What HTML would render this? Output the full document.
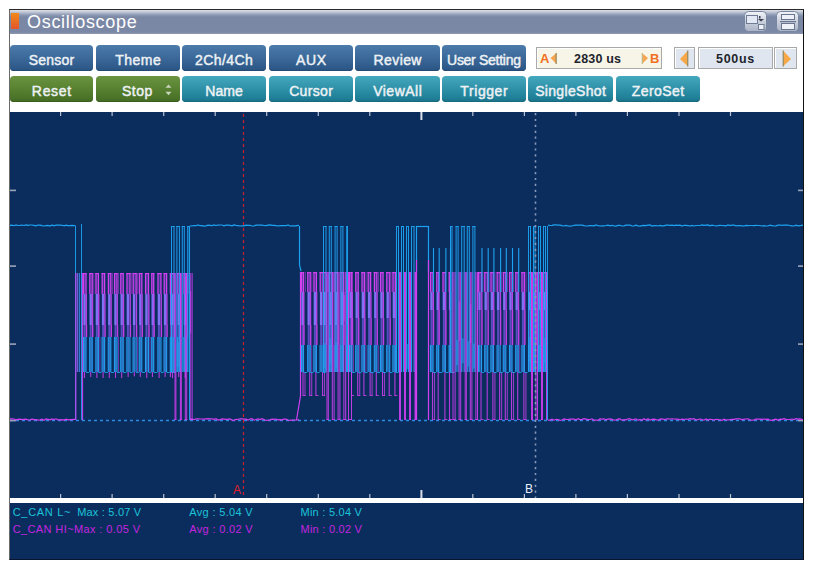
<!DOCTYPE html>
<html><head><meta charset="utf-8">
<style>
*{margin:0;padding:0;box-sizing:border-box}
html,body{width:813px;height:569px;background:#fff;overflow:hidden;font-family:"Liberation Sans",sans-serif}
.abs{position:absolute}
#frame{position:absolute;left:9px;top:9px;width:795px;height:551px;border-top:1px solid #2a2a2a;border-left:1px solid #6a6a6a;border-right:1px solid #111;border-bottom:1px solid #0a1630;}
#title{position:absolute;left:10px;top:10px;width:793px;height:24px;background:linear-gradient(#dde1e9 0px,#c0c7d5 2px,#8d99b3 5px,#7b88a5 7px,#7b88a5 22px,#8f9ab3 24px);}
#title .t{position:absolute;left:17px;top:1px;color:#fff;font-size:18px;line-height:22px;letter-spacing:0.7px}
#title .o{position:absolute;left:1px;top:3px;width:8px;height:16px;background:linear-gradient(#f28a1a,#e4552a)}
.btn{position:absolute;height:26px;border-radius:4px;color:#eef2f5;font-size:14px;font-weight:normal;-webkit-text-stroke:0.45px #eef2f5;text-align:center;line-height:30px;white-space:nowrap}
.b{background:linear-gradient(#4c7cac,#2f5b8b 85%,#29527f);box-shadow:inset 0 -1px 0 #244a76}
.g{background:linear-gradient(#6a943f,#4b7328 85%,#426822);box-shadow:inset 0 -1px 0 #3a5e1e}
.c{background:linear-gradient(#44a8be,#1f8098 85%,#1a7088);box-shadow:inset 0 -1px 0 #166a80}
#scope{position:absolute;left:10px;top:112px;width:793px;height:386px;background:#0b2d5e}
#info{position:absolute;left:10px;top:503px;width:793px;height:56px;background:#0b2d5e}
#info div{position:absolute;font-size:11px;line-height:12px;white-space:nowrap}
.cy{color:#1cc4d8} .mg{color:#c424de}
.box{position:absolute;border:1px solid #a9a9a9;box-shadow:inset 1px 1px 0 #fff}
.vt{position:absolute;font-weight:bold;font-size:12.5px;line-height:14px;color:#1e242c;white-space:nowrap}
</style></head><body>
<div id="frame"></div>
<div id="title"><div class="o"></div><div class="t">Oscilloscope</div></div>
<svg class="abs" style="left:0;top:0" width="813" height="40" viewBox="0 0 813 40">
 <defs><linearGradient id="ig" x1="0" y1="0" x2="0" y2="1"><stop offset="0" stop-color="#f2f4f8"/><stop offset="0.5" stop-color="#c9d0dc"/><stop offset="1" stop-color="#a9b3c6"/></linearGradient></defs>
 <rect x="744.5" y="11.5" width="22" height="20" rx="4" fill="url(#ig)" stroke="#7886a0"/>
 <rect x="746.5" y="15.5" width="11" height="8" fill="#e2e9f4" stroke="#707c94"/>
 <rect x="758.5" y="24.5" width="5.5" height="5" fill="#eef2f8" stroke="#707c94"/>
 <path d="M758 19 h6 l-3 2.5 z" fill="#3a4050"/><rect x="759" y="16" width="1.5" height="2.5" fill="#3a4050"/>
 <rect x="776.5" y="11.5" width="22" height="20" rx="4" fill="url(#ig)" stroke="#7886a0"/>
 <rect x="781.5" y="14.5" width="13" height="5" fill="#eef2f8" stroke="#6a7690"/>
 <rect x="780" y="21" width="16" height="1.2" fill="#6a7690"/>
 <rect x="781.5" y="23.5" width="13" height="6" fill="#eef2f8" stroke="#6a7690"/>
</svg>
<div class="btn b" style="left:10px;top:45px;width:83px"><span style="letter-spacing:0.20px;margin-right:-0.20px;">Sensor</span></div>
<div class="btn b" style="left:96px;top:45px;width:84px"><span style="letter-spacing:0.47px;margin-right:-0.47px;">Theme</span></div>
<div class="btn b" style="left:182px;top:45px;width:84px"><span style="letter-spacing:0.42px;margin-right:-0.42px;">2Ch/4Ch</span></div>
<div class="btn b" style="left:269px;top:45px;width:84px"><span style="letter-spacing:0.65px;margin-right:-0.65px;">AUX</span></div>
<div class="btn b" style="left:355px;top:45px;width:85px"><span style="letter-spacing:0.40px;margin-right:-0.40px;">Review</span></div>
<div class="btn b" style="left:442px;top:45px;width:84px"><span style="letter-spacing:-0.29px;margin-right:0.29px;">User Setting</span></div>
<div class="btn g" style="left:10px;top:76px;width:83px"><span style="letter-spacing:0.67px;margin-right:-0.67px;">Reset</span></div>
<div class="btn c" style="left:182px;top:76px;width:84px"><span style="letter-spacing:0.07px;margin-right:-0.07px;">Name</span></div>
<div class="btn c" style="left:269px;top:76px;width:84px"><span style="letter-spacing:0.34px;margin-right:-0.34px;">Cursor</span></div>
<div class="btn c" style="left:355px;top:76px;width:85px"><span style="letter-spacing:0.48px;margin-right:-0.48px;">ViewAll</span></div>
<div class="btn c" style="left:442px;top:76px;width:84px"><span style="letter-spacing:0.58px;margin-right:-0.58px;">Trigger</span></div>
<div class="btn c" style="left:528px;top:76px;width:85px"><span style="letter-spacing:0.33px;margin-right:-0.33px;">SingleShot</span></div>
<div class="btn c" style="left:616px;top:76px;width:84px"><span style="letter-spacing:0.42px;margin-right:-0.42px;">ZeroSet</span></div>
<div class="btn g" style="left:96px;top:76px;width:84px"></div>
<div class="abs" style="left:122px;top:76px;color:#eef2f5;font-size:14px;-webkit-text-stroke:0.45px #eef2f5;line-height:30px;letter-spacing:0.5px">Stop</div>
<svg class="abs" style="left:164px;top:83px" width="9" height="14"><path d="M1.5 4.8 L4.5 1.5 L7.5 4.8 Z M1.5 8.8 L4.5 12.3 L7.5 8.8 Z" fill="#c8d6bc"/></svg>
<div class="box" style="left:536px;top:47px;width:126px;height:22px;background:#f7f5e7"></div>
<div class="abs" style="left:540px;top:51px;color:#f07020;font-weight:bold;font-size:13px;line-height:15px">A</div>
<svg class="abs" style="left:549px;top:52px" width="10" height="14"><path d="M1.5 6 L7 1.5 L7 11.5 Z" fill="#f8a450"/><rect x="6.5" y="1" width="1.3" height="11" fill="#9c8a58"/></svg>
<div class="vt" style="left:574px;top:52px;letter-spacing:0.2px">2830 us</div>
<svg class="abs" style="left:640px;top:52px" width="10" height="14"><path d="M8 6 L2.5 1.5 L2.5 11.5 Z" fill="#f8a450"/><rect x="1.7" y="1" width="1.3" height="11" fill="#c8b888"/></svg>
<div class="abs" style="left:650px;top:51px;color:#f07020;font-weight:bold;font-size:13px;line-height:15px">B</div>
<div class="box" style="left:674px;top:47px;width:21px;height:22px;background:#dfe6ef"></div>
<svg class="abs" style="left:678px;top:49px" width="12" height="19"><path d="M2 10 L9.5 2 L9.5 17 Z" fill="#f8a848"/><rect x="9" y="1.5" width="1.4" height="16" fill="#a09068"/></svg>
<div class="box" style="left:698px;top:47px;width:75px;height:22px;background:#dfe6ef"></div>
<div class="vt" style="left:716px;top:52px;letter-spacing:0.7px">500us</div>
<div class="box" style="left:774px;top:47px;width:23px;height:22px;background:#dfe6ef"></div>
<svg class="abs" style="left:781px;top:49px" width="12" height="19"><path d="M10 10 L2.5 2 L2.5 17 Z" fill="#f8a848"/><rect x="1.6" y="1.5" width="1.4" height="16" fill="#a09068"/></svg>
<div id="scope"></div>
<div id="info">
 <div class="cy" style="left:2.7px;top:3px;letter-spacing:0.7px">C_CAN L~</div>
 <div class="cy" style="left:67.2px;top:3px;letter-spacing:0.2px">Max : 5.07 V</div>
 <div class="cy" style="left:179.3px;top:3px;letter-spacing:0.33px">Avg : 5.04 V</div>
 <div class="cy" style="left:290.5px;top:3px;letter-spacing:0.25px">Min : 5.04 V</div>
 <div class="mg" style="left:2.7px;top:19.6px;letter-spacing:0.39px">C_CAN HI~Max : 0.05 V</div>
 <div class="mg" style="left:179.3px;top:19.6px;letter-spacing:0.33px">Avg : 0.02 V</div>
 <div class="mg" style="left:290.5px;top:19.6px;letter-spacing:0.25px">Min : 0.02 V</div>
</div>
<svg class="abs" style="left:0;top:0" width="813" height="569" viewBox="0 0 813 569">
<defs><filter id="bl" x="0" y="0" width="1" height="1"><feGaussianBlur stdDeviation="0.2"/></filter><clipPath id="sc"><rect x="10" y="112" width="793" height="386"/></clipPath></defs>
<g clip-path="url(#sc)">
<line x1="10" y1="420.5" x2="803" y2="420.5" stroke="#2c8ae0" stroke-width="1.3" stroke-dasharray="3 3"/>
<rect x="60.0" y="112" width="1.2" height="4" fill="#b8c0d0"/>
<rect x="60.0" y="494" width="1.2" height="4" fill="#b8c0d0"/>
<rect x="111.5" y="112" width="1.2" height="4" fill="#b8c0d0"/>
<rect x="111.5" y="494" width="1.2" height="4" fill="#b8c0d0"/>
<rect x="163.1" y="112" width="1.2" height="4" fill="#b8c0d0"/>
<rect x="163.1" y="494" width="1.2" height="4" fill="#b8c0d0"/>
<rect x="214.6" y="112" width="1.2" height="4" fill="#b8c0d0"/>
<rect x="214.6" y="494" width="1.2" height="4" fill="#b8c0d0"/>
<rect x="266.1" y="112" width="1.2" height="4" fill="#b8c0d0"/>
<rect x="266.1" y="494" width="1.2" height="4" fill="#b8c0d0"/>
<rect x="317.7" y="112" width="1.2" height="4" fill="#b8c0d0"/>
<rect x="317.7" y="494" width="1.2" height="4" fill="#b8c0d0"/>
<rect x="369.2" y="112" width="1.2" height="4" fill="#b8c0d0"/>
<rect x="369.2" y="494" width="1.2" height="4" fill="#b8c0d0"/>
<rect x="420.4" y="112" width="2" height="8" fill="#d8dde8"/>
<rect x="420.4" y="490" width="2" height="8" fill="#d8dde8"/>
<rect x="472.2" y="112" width="1.2" height="4" fill="#b8c0d0"/>
<rect x="472.2" y="494" width="1.2" height="4" fill="#b8c0d0"/>
<rect x="523.8" y="112" width="1.2" height="4" fill="#b8c0d0"/>
<rect x="523.8" y="494" width="1.2" height="4" fill="#b8c0d0"/>
<rect x="575.3" y="112" width="1.2" height="4" fill="#b8c0d0"/>
<rect x="575.3" y="494" width="1.2" height="4" fill="#b8c0d0"/>
<rect x="626.8" y="112" width="1.2" height="4" fill="#b8c0d0"/>
<rect x="626.8" y="494" width="1.2" height="4" fill="#b8c0d0"/>
<rect x="678.4" y="112" width="1.2" height="4" fill="#b8c0d0"/>
<rect x="678.4" y="494" width="1.2" height="4" fill="#b8c0d0"/>
<rect x="729.9" y="112" width="1.2" height="4" fill="#b8c0d0"/>
<rect x="729.9" y="494" width="1.2" height="4" fill="#b8c0d0"/>
<rect x="10" y="189.6" width="6" height="1.6" fill="#9aa4b8"/>
<rect x="798" y="189.6" width="5" height="1.6" fill="#9aa4b8"/>
<rect x="10" y="265.3" width="6" height="1.6" fill="#9aa4b8"/>
<rect x="798" y="265.3" width="5" height="1.6" fill="#9aa4b8"/>
<rect x="10" y="343.3" width="6" height="1.6" fill="#9aa4b8"/>
<rect x="798" y="343.3" width="5" height="1.6" fill="#9aa4b8"/>
<rect x="10" y="419.8" width="6" height="1.6" fill="#9aa4b8"/>
<rect x="798" y="419.8" width="5" height="1.6" fill="#9aa4b8"/>
<g filter="url(#bl)"><polyline points="10.0,225.3 12.0,225.1 14.0,225.7 16.0,225.0 18.0,225.5 20.0,225.3 22.0,225.0 24.0,225.5 26.0,224.9 28.0,225.4 30.0,225.0 32.0,225.0 34.0,225.4 36.0,225.9 38.0,225.0 40.0,225.2 42.0,225.7 44.0,226.0 46.0,225.6 48.0,225.4 50.0,226.1 52.0,225.0 54.0,225.9 56.0,225.2 58.0,225.1 60.0,225.0 62.0,225.3 64.0,225.9 66.0,225.1 68.0,225.6 70.0,225.7 72.0,225.3 74.0,225.6 75.5,225.5" fill="none" stroke="#1ea2f0" stroke-width="1.2" opacity="1"/>
<polyline points="10.0,418.8 12.0,418.8 14.0,419.0 16.0,419.8 18.0,419.4 20.0,419.2 22.0,419.6 24.0,419.4 26.0,419.2 28.0,420.0 30.0,419.8 32.0,419.1 34.0,419.6 36.0,419.5 38.0,420.1 40.0,419.9 42.0,419.2 44.0,420.3 46.0,418.9 48.0,419.4 50.0,419.9 52.0,418.9 54.0,419.5 56.0,418.8 58.0,419.8 60.0,419.9 62.0,419.6 64.0,420.1 66.0,419.2 68.0,419.8 70.0,419.7 72.0,419.6 74.0,419.4 75.5,419.5" fill="none" stroke="#d23ff0" stroke-width="1.2" opacity="1"/>
<polyline points="190.0,225.9 192.0,226.0 194.0,225.5 196.0,225.7 198.0,225.0 200.0,225.7 202.0,225.7 204.0,226.1 206.0,225.9 208.0,225.2 210.0,225.4 212.0,225.7 214.0,224.9 216.0,225.5 218.0,225.1 220.0,225.0 222.0,225.0 224.0,225.8 226.0,225.1 228.0,225.2 230.0,225.4 232.0,225.9 234.0,225.0 236.0,225.4 238.0,225.6 240.0,226.0 242.0,225.9 244.0,225.9 246.0,225.2 248.0,225.4 250.0,225.3 252.0,226.0 254.0,226.0 256.0,225.1 258.0,225.1 260.0,225.2 262.0,225.2 264.0,225.5 266.0,225.6 268.0,225.2 270.0,224.9 272.0,225.4 274.0,225.3 276.0,225.6 278.0,226.0 280.0,225.7 282.0,225.5 284.0,225.6 286.0,225.7 288.0,225.0 290.0,226.0 292.0,225.8 294.0,225.9 296.0,225.9 298.0,225.4 299.0,225.5" fill="none" stroke="#1ea2f0" stroke-width="1.2" opacity="1"/>
<polyline points="190.0,419.3 192.0,418.9 194.0,419.7 196.0,418.8 198.0,418.8 200.0,419.0 202.0,419.0 204.0,419.2 206.0,418.8 208.0,418.7 210.0,418.9 212.0,418.9 214.0,419.3 216.0,418.7 218.0,420.1 220.0,419.7 222.0,418.9 224.0,419.1 226.0,419.3 228.0,419.3 230.0,418.9 232.0,420.1 234.0,420.3 236.0,419.4 238.0,419.5 240.0,418.8 242.0,418.9 244.0,419.2 246.0,419.1 248.0,420.0 250.0,419.0 252.0,418.7 254.0,420.2 256.0,419.5 258.0,418.9 260.0,419.6 262.0,418.7 264.0,419.5 266.0,420.3 268.0,420.1 270.0,419.8 272.0,419.1 274.0,419.3 276.0,419.0 278.0,419.9 280.0,419.6 282.0,419.9 284.0,419.2 286.0,419.1 288.0,420.0 290.0,420.3 292.0,420.1 294.0,420.0 296.0,420.0 298.0,419.9 299.0,419.5" fill="none" stroke="#d23ff0" stroke-width="1.2" opacity="1"/>
<polyline points="548.0,225.2 550.0,225.5 552.0,225.3 554.0,224.9 556.0,224.9 558.0,225.2 560.0,225.2 562.0,225.7 564.0,226.0 566.0,225.4 568.0,226.0 570.0,226.1 572.0,226.0 574.0,225.3 576.0,225.2 578.0,225.2 580.0,225.1 582.0,225.1 584.0,225.6 586.0,226.0 588.0,225.9 590.0,225.5 592.0,225.7 594.0,225.9 596.0,225.0 598.0,225.7 600.0,226.0 602.0,225.8 604.0,225.8 606.0,225.5 608.0,225.1 610.0,225.8 612.0,225.3 614.0,225.9 616.0,226.1 618.0,225.4 620.0,225.4 622.0,226.0 624.0,225.8 626.0,225.1 628.0,225.1 630.0,225.1 632.0,226.0 634.0,225.9 636.0,225.1 638.0,225.9 640.0,226.1 642.0,225.7 644.0,225.3 646.0,225.6 648.0,225.1 650.0,224.9 652.0,226.1 654.0,225.7 656.0,225.5 658.0,226.0 660.0,225.4 662.0,225.9 664.0,225.9 666.0,225.2 668.0,225.2 670.0,225.3 672.0,225.2 674.0,225.6 676.0,225.2 678.0,225.4 680.0,225.1 682.0,226.0 684.0,225.3 686.0,225.4 688.0,225.6 690.0,226.0 692.0,225.4 694.0,226.0 696.0,225.5 698.0,225.5 700.0,225.5 702.0,224.9 704.0,225.4 706.0,225.1 708.0,224.9 710.0,225.9 712.0,225.1 714.0,225.5 716.0,225.8 718.0,225.6 720.0,225.3 722.0,225.5 724.0,225.6 726.0,225.8 728.0,225.0 730.0,225.6 732.0,225.2 734.0,225.2 736.0,225.8 738.0,225.5 740.0,225.6 742.0,225.8 744.0,226.0 746.0,225.4 748.0,225.6 750.0,225.5 752.0,225.5 754.0,225.7 756.0,225.4 758.0,225.5 760.0,225.5 762.0,226.0 764.0,225.7 766.0,226.0 768.0,226.0 770.0,225.2 772.0,225.6 774.0,226.0 776.0,225.9 778.0,225.1 780.0,225.0 782.0,225.4 784.0,225.0 786.0,225.2 788.0,225.0 790.0,225.7 792.0,225.8 794.0,226.0 796.0,225.1 798.0,225.8 800.0,225.7 802.0,225.1 803.0,225.5" fill="none" stroke="#1ea2f0" stroke-width="1.2" opacity="1"/>
<polyline points="548.0,420.1 550.0,420.2 552.0,419.1 554.0,420.2 556.0,419.3 558.0,419.5 560.0,420.3 562.0,420.0 564.0,419.0 566.0,419.4 568.0,419.5 570.0,419.2 572.0,419.0 574.0,419.2 576.0,419.9 578.0,418.7 580.0,419.6 582.0,419.4 584.0,418.7 586.0,419.2 588.0,419.7 590.0,419.5 592.0,418.8 594.0,420.3 596.0,420.0 598.0,420.3 600.0,418.9 602.0,419.1 604.0,418.8 606.0,419.9 608.0,419.1 610.0,418.9 612.0,419.4 614.0,420.2 616.0,420.0 618.0,419.1 620.0,418.9 622.0,420.2 624.0,419.6 626.0,419.8 628.0,418.8 630.0,418.8 632.0,419.8 634.0,419.4 636.0,418.8 638.0,420.2 640.0,419.7 642.0,420.0 644.0,418.8 646.0,420.1 648.0,418.8 650.0,420.1 652.0,419.4 654.0,419.2 656.0,419.6 658.0,420.2 660.0,419.1 662.0,418.9 664.0,419.5 666.0,419.1 668.0,418.9 670.0,419.0 672.0,418.8 674.0,419.0 676.0,419.2 678.0,419.2 680.0,419.9 682.0,419.2 684.0,419.5 686.0,419.0 688.0,419.3 690.0,418.7 692.0,419.1 694.0,418.7 696.0,419.9 698.0,419.6 700.0,419.0 702.0,419.5 704.0,420.2 706.0,418.9 708.0,420.0 710.0,419.4 712.0,419.5 714.0,420.0 716.0,419.3 718.0,419.5 720.0,419.8 722.0,420.3 724.0,419.2 726.0,420.0 728.0,419.8 730.0,419.7 732.0,419.3 734.0,419.3 736.0,418.8 738.0,418.9 740.0,418.8 742.0,419.9 744.0,419.1 746.0,419.0 748.0,418.8 750.0,420.0 752.0,420.1 754.0,419.8 756.0,419.2 758.0,419.1 760.0,419.2 762.0,419.4 764.0,419.0 766.0,419.4 768.0,419.1 770.0,420.2 772.0,420.3 774.0,419.6 776.0,419.1 778.0,420.2 780.0,419.2 782.0,419.3 784.0,418.7 786.0,419.3 788.0,419.5 790.0,419.5 792.0,419.0 794.0,419.5 796.0,418.7 798.0,419.1 800.0,418.8 802.0,419.3 803.0,419.5" fill="none" stroke="#d23ff0" stroke-width="1.2" opacity="1"/>
<line x1="75.5" y1="226" x2="75.5" y2="420" stroke="#1ea2f0" stroke-width="1" opacity="0.9"/>
<line x1="75.8" y1="273" x2="75.8" y2="420" stroke="#d23ff0" stroke-width="1.2" opacity="0.9"/>
<line x1="81.5" y1="224" x2="81.5" y2="420" stroke="#1ea2f0" stroke-width="1" opacity="0.9"/>
<line x1="82.5" y1="273" x2="82.5" y2="420" stroke="#d23ff0" stroke-width="1.2" opacity="0.9"/>
<line x1="77.5" y1="273" x2="77.5" y2="372" stroke="#8a6cf0" stroke-width="1.5" opacity="0.8"/>
<line x1="79.5" y1="273" x2="79.5" y2="372" stroke="#3a90f0" stroke-width="1.2" opacity="0.8"/>
<rect x="84" y="274" width="1.5" height="20" fill="#7048c0" opacity="0.5"/>
<line x1="83.6" y1="273" x2="83.6" y2="294" stroke="#d23ff0" stroke-width="1.3" opacity="1"/>
<line x1="86" y1="273" x2="86" y2="294" stroke="#d23ff0" stroke-width="1.3" opacity="1"/>
<line x1="83" y1="273.6" x2="86.6" y2="273.6" stroke="#d23ff0" stroke-width="1.2" opacity="1"/>
<rect x="83.3" y="294" width="2.4" height="31" fill="#8070f4" opacity="1"/>
<line x1="86.3" y1="294" x2="86.3" y2="325" stroke="#c844f0" stroke-width="1.4" opacity="0.9"/>
<rect x="83.5" y="325" width="2" height="12" fill="#6a54d8" opacity="0.8"/>
<rect x="85.7" y="325" width="1.5" height="12" fill="#d040f0" opacity="0.9"/>
<rect x="84" y="337" width="1.6" height="35" fill="#4490f4" opacity="0.7"/>
<line x1="83.5" y1="337" x2="83.5" y2="372" stroke="#22a0f0" stroke-width="1.1" opacity="1"/>
<line x1="86" y1="337" x2="86" y2="372" stroke="#22a0f0" stroke-width="1.1" opacity="1"/>
<line x1="84.5" y1="372" x2="84.5" y2="378" stroke="#d23ff0" stroke-width="1.1" opacity="0.85"/>
<line x1="86" y1="372.5" x2="89.2" y2="372.5" stroke="#1ea2f0" stroke-width="1" opacity="0.85"/>
<rect x="90.2" y="274" width="1.5" height="20" fill="#7048c0" opacity="0.5"/>
<line x1="89.8" y1="273" x2="89.8" y2="294" stroke="#d23ff0" stroke-width="1.3" opacity="1"/>
<line x1="92.2" y1="273" x2="92.2" y2="294" stroke="#d23ff0" stroke-width="1.3" opacity="1"/>
<line x1="89.2" y1="273.6" x2="92.8" y2="273.6" stroke="#d23ff0" stroke-width="1.2" opacity="1"/>
<line x1="93.8" y1="273" x2="93.8" y2="294" stroke="#d23ff0" stroke-width="1" opacity="0.5"/>
<rect x="89.5" y="294" width="2.4" height="31" fill="#8070f4" opacity="1"/>
<line x1="92.5" y1="294" x2="92.5" y2="325" stroke="#c844f0" stroke-width="1.4" opacity="0.9"/>
<rect x="89.7" y="325" width="2" height="12" fill="#6a54d8" opacity="0.8"/>
<rect x="91.9" y="325" width="1.5" height="12" fill="#d040f0" opacity="0.9"/>
<rect x="90.2" y="337" width="1.6" height="35" fill="#4490f4" opacity="0.7"/>
<line x1="89.7" y1="337" x2="89.7" y2="372" stroke="#22a0f0" stroke-width="1.1" opacity="1"/>
<line x1="92.2" y1="337" x2="92.2" y2="372" stroke="#22a0f0" stroke-width="1.1" opacity="1"/>
<line x1="90.7" y1="372" x2="90.7" y2="377.1" stroke="#d23ff0" stroke-width="1.1" opacity="0.85"/>
<line x1="92.2" y1="372.5" x2="95.4" y2="372.5" stroke="#1ea2f0" stroke-width="1" opacity="0.85"/>
<rect x="96.4" y="274" width="1.5" height="20" fill="#7048c0" opacity="0.5"/>
<line x1="96.0" y1="273" x2="96.0" y2="294" stroke="#d23ff0" stroke-width="1.3" opacity="1"/>
<line x1="98.4" y1="273" x2="98.4" y2="294" stroke="#d23ff0" stroke-width="1.3" opacity="1"/>
<line x1="95.4" y1="273.6" x2="99.0" y2="273.6" stroke="#d23ff0" stroke-width="1.2" opacity="1"/>
<rect x="95.7" y="294" width="2.4" height="31" fill="#8070f4" opacity="1"/>
<line x1="98.7" y1="294" x2="98.7" y2="325" stroke="#c844f0" stroke-width="1.4" opacity="0.9"/>
<rect x="95.9" y="325" width="2" height="12" fill="#6a54d8" opacity="0.8"/>
<rect x="98.10000000000001" y="325" width="1.5" height="12" fill="#d040f0" opacity="0.9"/>
<rect x="96.4" y="337" width="1.6" height="35" fill="#4490f4" opacity="0.7"/>
<line x1="95.9" y1="337" x2="95.9" y2="372" stroke="#22a0f0" stroke-width="1.1" opacity="1"/>
<line x1="98.4" y1="337" x2="98.4" y2="372" stroke="#22a0f0" stroke-width="1.1" opacity="1"/>
<line x1="99.9" y1="337" x2="99.9" y2="372" stroke="#d23ff0" stroke-width="1" opacity="0.5"/>
<line x1="96.9" y1="372" x2="96.9" y2="378" stroke="#d23ff0" stroke-width="1.1" opacity="0.85"/>
<line x1="98.4" y1="372.5" x2="101.60000000000001" y2="372.5" stroke="#1ea2f0" stroke-width="1" opacity="0.85"/>
<rect x="102.60000000000001" y="274" width="1.5" height="20" fill="#7048c0" opacity="0.5"/>
<line x1="102.2" y1="273" x2="102.2" y2="294" stroke="#d23ff0" stroke-width="1.3" opacity="1"/>
<line x1="104.60000000000001" y1="273" x2="104.60000000000001" y2="294" stroke="#d23ff0" stroke-width="1.3" opacity="1"/>
<line x1="101.60000000000001" y1="273.6" x2="105.2" y2="273.6" stroke="#d23ff0" stroke-width="1.2" opacity="1"/>
<rect x="101.9" y="294" width="2.4" height="31" fill="#8070f4" opacity="1"/>
<line x1="104.9" y1="294" x2="104.9" y2="325" stroke="#c844f0" stroke-width="1.4" opacity="0.9"/>
<rect x="102.10000000000001" y="325" width="2" height="12" fill="#6a54d8" opacity="0.8"/>
<rect x="104.30000000000001" y="325" width="1.5" height="12" fill="#d040f0" opacity="0.9"/>
<rect x="102.60000000000001" y="337" width="1.6" height="35" fill="#4490f4" opacity="0.7"/>
<line x1="102.10000000000001" y1="337" x2="102.10000000000001" y2="372" stroke="#22a0f0" stroke-width="1.1" opacity="1"/>
<line x1="104.60000000000001" y1="337" x2="104.60000000000001" y2="372" stroke="#22a0f0" stroke-width="1.1" opacity="1"/>
<line x1="103.10000000000001" y1="372" x2="103.10000000000001" y2="378" stroke="#d23ff0" stroke-width="1.1" opacity="0.85"/>
<line x1="104.60000000000001" y1="372.5" x2="107.80000000000001" y2="372.5" stroke="#1ea2f0" stroke-width="1" opacity="0.85"/>
<rect x="108.80000000000001" y="274" width="1.5" height="20" fill="#7048c0" opacity="0.5"/>
<line x1="108.4" y1="273" x2="108.4" y2="294" stroke="#d23ff0" stroke-width="1.3" opacity="1"/>
<line x1="110.80000000000001" y1="273" x2="110.80000000000001" y2="294" stroke="#d23ff0" stroke-width="1.3" opacity="1"/>
<line x1="107.80000000000001" y1="273.6" x2="111.4" y2="273.6" stroke="#d23ff0" stroke-width="1.2" opacity="1"/>
<line x1="112.4" y1="273" x2="112.4" y2="294" stroke="#d23ff0" stroke-width="1" opacity="0.5"/>
<rect x="108.10000000000001" y="294" width="2.4" height="31" fill="#8070f4" opacity="1"/>
<line x1="111.10000000000001" y1="294" x2="111.10000000000001" y2="325" stroke="#c844f0" stroke-width="1.4" opacity="0.9"/>
<rect x="108.30000000000001" y="325" width="2" height="12" fill="#6a54d8" opacity="0.8"/>
<rect x="110.50000000000001" y="325" width="1.5" height="12" fill="#d040f0" opacity="0.9"/>
<rect x="108.80000000000001" y="337" width="1.6" height="35" fill="#4490f4" opacity="0.7"/>
<line x1="108.30000000000001" y1="337" x2="108.30000000000001" y2="372" stroke="#22a0f0" stroke-width="1.1" opacity="1"/>
<line x1="110.80000000000001" y1="337" x2="110.80000000000001" y2="372" stroke="#22a0f0" stroke-width="1.1" opacity="1"/>
<line x1="109.30000000000001" y1="372" x2="109.30000000000001" y2="378" stroke="#d23ff0" stroke-width="1.1" opacity="0.85"/>
<line x1="110.80000000000001" y1="372.5" x2="114.00000000000001" y2="372.5" stroke="#1ea2f0" stroke-width="1" opacity="0.85"/>
<rect x="115.00000000000001" y="274" width="1.5" height="20" fill="#7048c0" opacity="0.5"/>
<line x1="114.60000000000001" y1="273" x2="114.60000000000001" y2="294" stroke="#d23ff0" stroke-width="1.3" opacity="1"/>
<line x1="117.00000000000001" y1="273" x2="117.00000000000001" y2="294" stroke="#d23ff0" stroke-width="1.3" opacity="1"/>
<line x1="114.00000000000001" y1="273.6" x2="117.60000000000001" y2="273.6" stroke="#d23ff0" stroke-width="1.2" opacity="1"/>
<line x1="118.60000000000001" y1="273" x2="118.60000000000001" y2="294" stroke="#d23ff0" stroke-width="1" opacity="0.5"/>
<rect x="114.30000000000001" y="294" width="2.4" height="31" fill="#8070f4" opacity="1"/>
<line x1="117.30000000000001" y1="294" x2="117.30000000000001" y2="325" stroke="#c844f0" stroke-width="1.4" opacity="0.9"/>
<rect x="114.50000000000001" y="325" width="2" height="12" fill="#6a54d8" opacity="0.8"/>
<rect x="116.70000000000002" y="325" width="1.5" height="12" fill="#d040f0" opacity="0.9"/>
<rect x="115.00000000000001" y="337" width="1.6" height="35" fill="#4490f4" opacity="0.7"/>
<line x1="114.50000000000001" y1="337" x2="114.50000000000001" y2="372" stroke="#22a0f0" stroke-width="1.1" opacity="1"/>
<line x1="117.00000000000001" y1="337" x2="117.00000000000001" y2="372" stroke="#22a0f0" stroke-width="1.1" opacity="1"/>
<line x1="118.50000000000001" y1="337" x2="118.50000000000001" y2="372" stroke="#d23ff0" stroke-width="1" opacity="0.5"/>
<line x1="115.50000000000001" y1="372" x2="115.50000000000001" y2="378" stroke="#d23ff0" stroke-width="1.1" opacity="0.85"/>
<line x1="117.00000000000001" y1="372.5" x2="120.20000000000002" y2="372.5" stroke="#1ea2f0" stroke-width="1" opacity="0.85"/>
<rect x="121.20000000000002" y="274" width="1.5" height="20" fill="#7048c0" opacity="0.5"/>
<line x1="120.80000000000001" y1="273" x2="120.80000000000001" y2="294" stroke="#d23ff0" stroke-width="1.3" opacity="1"/>
<line x1="123.20000000000002" y1="273" x2="123.20000000000002" y2="294" stroke="#d23ff0" stroke-width="1.3" opacity="1"/>
<line x1="120.20000000000002" y1="273.6" x2="123.80000000000001" y2="273.6" stroke="#d23ff0" stroke-width="1.2" opacity="1"/>
<rect x="120.50000000000001" y="294" width="2.4" height="31" fill="#8070f4" opacity="1"/>
<line x1="123.50000000000001" y1="294" x2="123.50000000000001" y2="325" stroke="#c844f0" stroke-width="1.4" opacity="0.9"/>
<rect x="120.70000000000002" y="325" width="2" height="12" fill="#6a54d8" opacity="0.8"/>
<rect x="122.90000000000002" y="325" width="1.5" height="12" fill="#d040f0" opacity="0.9"/>
<rect x="121.20000000000002" y="337" width="1.6" height="35" fill="#4490f4" opacity="0.7"/>
<line x1="120.70000000000002" y1="337" x2="120.70000000000002" y2="372" stroke="#22a0f0" stroke-width="1.1" opacity="1"/>
<line x1="123.20000000000002" y1="337" x2="123.20000000000002" y2="372" stroke="#22a0f0" stroke-width="1.1" opacity="1"/>
<line x1="121.70000000000002" y1="372" x2="121.70000000000002" y2="378" stroke="#d23ff0" stroke-width="1.1" opacity="0.85"/>
<line x1="123.20000000000002" y1="372.5" x2="126.40000000000002" y2="372.5" stroke="#1ea2f0" stroke-width="1" opacity="0.85"/>
<rect x="127.40000000000002" y="274" width="2.0" height="20" fill="#7048c0" opacity="0.5"/>
<line x1="127.00000000000001" y1="273" x2="127.00000000000001" y2="294" stroke="#d23ff0" stroke-width="1.3" opacity="1"/>
<line x1="129.90000000000003" y1="273" x2="129.90000000000003" y2="294" stroke="#d23ff0" stroke-width="1.3" opacity="1"/>
<line x1="126.40000000000002" y1="273.6" x2="130.50000000000003" y2="273.6" stroke="#d23ff0" stroke-width="1.2" opacity="1"/>
<line x1="131.25000000000003" y1="273" x2="131.25000000000003" y2="294" stroke="#d23ff0" stroke-width="1" opacity="0.5"/>
<rect x="126.70000000000002" y="294" width="2.4" height="31" fill="#8070f4" opacity="1"/>
<line x1="130.20000000000005" y1="294" x2="130.20000000000005" y2="325" stroke="#c844f0" stroke-width="1.4" opacity="0.9"/>
<rect x="126.90000000000002" y="325" width="2" height="12" fill="#6a54d8" opacity="0.8"/>
<rect x="129.60000000000002" y="325" width="1.5" height="12" fill="#d040f0" opacity="0.9"/>
<rect x="127.40000000000002" y="337" width="1.6" height="35" fill="#4490f4" opacity="0.7"/>
<line x1="126.90000000000002" y1="337" x2="126.90000000000002" y2="372" stroke="#22a0f0" stroke-width="1.1" opacity="1"/>
<line x1="129.90000000000003" y1="337" x2="129.90000000000003" y2="372" stroke="#22a0f0" stroke-width="1.1" opacity="1"/>
<line x1="128.15000000000003" y1="372" x2="128.15000000000003" y2="377.1" stroke="#d23ff0" stroke-width="1.1" opacity="0.85"/>
<line x1="129.90000000000003" y1="372.5" x2="132.60000000000002" y2="372.5" stroke="#1ea2f0" stroke-width="1" opacity="0.85"/>
<rect x="133.60000000000002" y="274" width="2.0" height="20" fill="#7048c0" opacity="0.5"/>
<line x1="133.20000000000002" y1="273" x2="133.20000000000002" y2="294" stroke="#d23ff0" stroke-width="1.3" opacity="1"/>
<line x1="136.10000000000002" y1="273" x2="136.10000000000002" y2="294" stroke="#d23ff0" stroke-width="1.3" opacity="1"/>
<line x1="132.60000000000002" y1="273.6" x2="136.70000000000002" y2="273.6" stroke="#d23ff0" stroke-width="1.2" opacity="1"/>
<line x1="137.45000000000002" y1="273" x2="137.45000000000002" y2="294" stroke="#d23ff0" stroke-width="1" opacity="0.5"/>
<rect x="132.90000000000003" y="294" width="2.4" height="31" fill="#8070f4" opacity="1"/>
<line x1="136.40000000000003" y1="294" x2="136.40000000000003" y2="325" stroke="#c844f0" stroke-width="1.4" opacity="0.9"/>
<rect x="133.10000000000002" y="325" width="2" height="12" fill="#6a54d8" opacity="0.8"/>
<rect x="135.8" y="325" width="1.5" height="12" fill="#d040f0" opacity="0.9"/>
<rect x="133.60000000000002" y="337" width="1.6" height="35" fill="#4490f4" opacity="0.7"/>
<line x1="133.10000000000002" y1="337" x2="133.10000000000002" y2="372" stroke="#22a0f0" stroke-width="1.1" opacity="1"/>
<line x1="136.10000000000002" y1="337" x2="136.10000000000002" y2="372" stroke="#22a0f0" stroke-width="1.1" opacity="1"/>
<line x1="137.60000000000002" y1="337" x2="137.60000000000002" y2="372" stroke="#d23ff0" stroke-width="1" opacity="0.5"/>
<line x1="134.35000000000002" y1="372" x2="134.35000000000002" y2="376.2" stroke="#d23ff0" stroke-width="1.1" opacity="0.85"/>
<line x1="136.10000000000002" y1="372.5" x2="138.8" y2="372.5" stroke="#1ea2f0" stroke-width="1" opacity="0.85"/>
<rect x="139.8" y="274" width="1.5" height="20" fill="#7048c0" opacity="0.5"/>
<line x1="139.4" y1="273" x2="139.4" y2="294" stroke="#d23ff0" stroke-width="1.3" opacity="1"/>
<line x1="141.8" y1="273" x2="141.8" y2="294" stroke="#d23ff0" stroke-width="1.3" opacity="1"/>
<line x1="138.8" y1="273.6" x2="142.4" y2="273.6" stroke="#d23ff0" stroke-width="1.2" opacity="1"/>
<rect x="139.10000000000002" y="294" width="2.4" height="31" fill="#8070f4" opacity="1"/>
<line x1="142.10000000000002" y1="294" x2="142.10000000000002" y2="325" stroke="#c844f0" stroke-width="1.4" opacity="0.9"/>
<rect x="139.3" y="325" width="2" height="12" fill="#6a54d8" opacity="0.8"/>
<rect x="141.5" y="325" width="1.5" height="12" fill="#d040f0" opacity="0.9"/>
<rect x="139.8" y="337" width="1.6" height="35" fill="#4490f4" opacity="0.7"/>
<line x1="139.3" y1="337" x2="139.3" y2="372" stroke="#22a0f0" stroke-width="1.1" opacity="1"/>
<line x1="141.8" y1="337" x2="141.8" y2="372" stroke="#22a0f0" stroke-width="1.1" opacity="1"/>
<line x1="140.3" y1="372" x2="140.3" y2="377.1" stroke="#d23ff0" stroke-width="1.1" opacity="0.85"/>
<line x1="141.8" y1="372.5" x2="145.0" y2="372.5" stroke="#1ea2f0" stroke-width="1" opacity="0.85"/>
<rect x="146.0" y="274" width="2.0" height="20" fill="#7048c0" opacity="0.5"/>
<line x1="145.6" y1="273" x2="145.6" y2="294" stroke="#d23ff0" stroke-width="1.3" opacity="1"/>
<line x1="148.5" y1="273" x2="148.5" y2="294" stroke="#d23ff0" stroke-width="1.3" opacity="1"/>
<line x1="145.0" y1="273.6" x2="149.1" y2="273.6" stroke="#d23ff0" stroke-width="1.2" opacity="1"/>
<rect x="145.3" y="294" width="2.4" height="31" fill="#8070f4" opacity="1"/>
<line x1="148.8" y1="294" x2="148.8" y2="325" stroke="#c844f0" stroke-width="1.4" opacity="0.9"/>
<rect x="145.5" y="325" width="2" height="12" fill="#6a54d8" opacity="0.8"/>
<rect x="148.2" y="325" width="1.5" height="12" fill="#d040f0" opacity="0.9"/>
<rect x="146.0" y="337" width="1.6" height="35" fill="#4490f4" opacity="0.7"/>
<line x1="145.5" y1="337" x2="145.5" y2="372" stroke="#22a0f0" stroke-width="1.1" opacity="1"/>
<line x1="148.5" y1="337" x2="148.5" y2="372" stroke="#22a0f0" stroke-width="1.1" opacity="1"/>
<line x1="150.0" y1="337" x2="150.0" y2="372" stroke="#d23ff0" stroke-width="1" opacity="0.5"/>
<line x1="146.75" y1="372" x2="146.75" y2="378" stroke="#d23ff0" stroke-width="1.1" opacity="0.85"/>
<line x1="148.5" y1="372.5" x2="151.2" y2="372.5" stroke="#1ea2f0" stroke-width="1" opacity="0.85"/>
<rect x="152.2" y="274" width="1.0" height="20" fill="#7048c0" opacity="0.5"/>
<line x1="151.79999999999998" y1="273" x2="151.79999999999998" y2="294" stroke="#d23ff0" stroke-width="1.3" opacity="1"/>
<line x1="153.7" y1="273" x2="153.7" y2="294" stroke="#d23ff0" stroke-width="1.3" opacity="1"/>
<line x1="151.2" y1="273.6" x2="154.29999999999998" y2="273.6" stroke="#d23ff0" stroke-width="1.2" opacity="1"/>
<rect x="151.5" y="294" width="2.4" height="31" fill="#8070f4" opacity="1"/>
<line x1="154.0" y1="294" x2="154.0" y2="325" stroke="#c844f0" stroke-width="1.4" opacity="0.9"/>
<rect x="151.7" y="325" width="2" height="12" fill="#6a54d8" opacity="0.8"/>
<rect x="153.39999999999998" y="325" width="1.5" height="12" fill="#d040f0" opacity="0.9"/>
<rect x="152.2" y="337" width="1.6" height="35" fill="#4490f4" opacity="0.7"/>
<line x1="151.7" y1="337" x2="151.7" y2="372" stroke="#22a0f0" stroke-width="1.1" opacity="1"/>
<line x1="153.7" y1="337" x2="153.7" y2="372" stroke="#22a0f0" stroke-width="1.1" opacity="1"/>
<line x1="152.45" y1="372" x2="152.45" y2="377.1" stroke="#d23ff0" stroke-width="1.1" opacity="0.85"/>
<line x1="153.7" y1="372.5" x2="157.39999999999998" y2="372.5" stroke="#1ea2f0" stroke-width="1" opacity="0.85"/>
<rect x="158.39999999999998" y="274" width="2.0" height="20" fill="#7048c0" opacity="0.5"/>
<line x1="157.99999999999997" y1="273" x2="157.99999999999997" y2="294" stroke="#d23ff0" stroke-width="1.3" opacity="1"/>
<line x1="160.89999999999998" y1="273" x2="160.89999999999998" y2="294" stroke="#d23ff0" stroke-width="1.3" opacity="1"/>
<line x1="157.39999999999998" y1="273.6" x2="161.49999999999997" y2="273.6" stroke="#d23ff0" stroke-width="1.2" opacity="1"/>
<rect x="157.7" y="294" width="2.4" height="31" fill="#8070f4" opacity="1"/>
<line x1="161.2" y1="294" x2="161.2" y2="325" stroke="#c844f0" stroke-width="1.4" opacity="0.9"/>
<rect x="157.89999999999998" y="325" width="2" height="12" fill="#6a54d8" opacity="0.8"/>
<rect x="160.59999999999997" y="325" width="1.5" height="12" fill="#d040f0" opacity="0.9"/>
<rect x="158.39999999999998" y="337" width="1.6" height="35" fill="#4490f4" opacity="0.7"/>
<line x1="157.89999999999998" y1="337" x2="157.89999999999998" y2="372" stroke="#22a0f0" stroke-width="1.1" opacity="1"/>
<line x1="160.89999999999998" y1="337" x2="160.89999999999998" y2="372" stroke="#22a0f0" stroke-width="1.1" opacity="1"/>
<line x1="159.14999999999998" y1="372" x2="159.14999999999998" y2="378" stroke="#d23ff0" stroke-width="1.1" opacity="0.85"/>
<line x1="160.89999999999998" y1="372.5" x2="163.59999999999997" y2="372.5" stroke="#1ea2f0" stroke-width="1" opacity="0.85"/>
<rect x="164.59999999999997" y="274" width="1.5" height="20" fill="#7048c0" opacity="0.5"/>
<line x1="164.19999999999996" y1="273" x2="164.19999999999996" y2="294" stroke="#d23ff0" stroke-width="1.3" opacity="1"/>
<line x1="166.59999999999997" y1="273" x2="166.59999999999997" y2="294" stroke="#d23ff0" stroke-width="1.3" opacity="1"/>
<line x1="163.59999999999997" y1="273.6" x2="167.19999999999996" y2="273.6" stroke="#d23ff0" stroke-width="1.2" opacity="1"/>
<rect x="163.89999999999998" y="294" width="2.4" height="31" fill="#8070f4" opacity="1"/>
<line x1="166.89999999999998" y1="294" x2="166.89999999999998" y2="325" stroke="#c844f0" stroke-width="1.4" opacity="0.9"/>
<rect x="164.09999999999997" y="325" width="2" height="12" fill="#6a54d8" opacity="0.8"/>
<rect x="166.29999999999995" y="325" width="1.5" height="12" fill="#d040f0" opacity="0.9"/>
<rect x="164.59999999999997" y="337" width="1.6" height="35" fill="#4490f4" opacity="0.7"/>
<line x1="164.09999999999997" y1="337" x2="164.09999999999997" y2="372" stroke="#22a0f0" stroke-width="1.1" opacity="1"/>
<line x1="166.59999999999997" y1="337" x2="166.59999999999997" y2="372" stroke="#22a0f0" stroke-width="1.1" opacity="1"/>
<line x1="165.09999999999997" y1="372" x2="165.09999999999997" y2="377.1" stroke="#d23ff0" stroke-width="1.1" opacity="0.85"/>
<line x1="166.59999999999997" y1="372.5" x2="169.79999999999995" y2="372.5" stroke="#1ea2f0" stroke-width="1" opacity="0.85"/>
<rect x="170.79999999999995" y="274" width="-0.2999999999999545" height="20" fill="#7048c0" opacity="0.5"/>
<line x1="170.39999999999995" y1="273" x2="170.39999999999995" y2="294" stroke="#d23ff0" stroke-width="1.3" opacity="1"/>
<line x1="171.0" y1="273" x2="171.0" y2="294" stroke="#d23ff0" stroke-width="1.3" opacity="1"/>
<line x1="169.79999999999995" y1="273.6" x2="171.6" y2="273.6" stroke="#d23ff0" stroke-width="1.2" opacity="1"/>
<rect x="170.09999999999997" y="294" width="2.4" height="31" fill="#8070f4" opacity="1"/>
<line x1="171.3" y1="294" x2="171.3" y2="325" stroke="#c844f0" stroke-width="1.4" opacity="0.9"/>
<rect x="170.29999999999995" y="325" width="2" height="12" fill="#6a54d8" opacity="0.8"/>
<rect x="170.7" y="325" width="1.5" height="12" fill="#d040f0" opacity="0.9"/>
<rect x="170.79999999999995" y="337" width="1.6" height="35" fill="#4490f4" opacity="0.7"/>
<line x1="170.29999999999995" y1="337" x2="170.29999999999995" y2="372" stroke="#22a0f0" stroke-width="1.1" opacity="1"/>
<line x1="171.0" y1="337" x2="171.0" y2="372" stroke="#22a0f0" stroke-width="1.1" opacity="1"/>
<line x1="170.39999999999998" y1="372" x2="170.39999999999998" y2="377.1" stroke="#d23ff0" stroke-width="1.1" opacity="0.85"/>
<line x1="171.0" y1="372.5" x2="175.99999999999994" y2="372.5" stroke="#1ea2f0" stroke-width="1" opacity="0.85"/>
<rect x="172" y="274" width="1.5" height="20" fill="#7048c0" opacity="0.5"/>
<line x1="171.6" y1="273" x2="171.6" y2="294" stroke="#d23ff0" stroke-width="1.3" opacity="1"/>
<line x1="174" y1="273" x2="174" y2="294" stroke="#d23ff0" stroke-width="1.3" opacity="1"/>
<line x1="171" y1="273.6" x2="174.6" y2="273.6" stroke="#d23ff0" stroke-width="1.2" opacity="1"/>
<rect x="171.3" y="294" width="2.4" height="31" fill="#8070f4" opacity="1"/>
<line x1="174.3" y1="294" x2="174.3" y2="325" stroke="#c844f0" stroke-width="1.4" opacity="0.9"/>
<rect x="171.5" y="325" width="2" height="12" fill="#6a54d8" opacity="0.8"/>
<rect x="173.7" y="325" width="1.5" height="12" fill="#d040f0" opacity="0.9"/>
<rect x="172" y="337" width="1.6" height="35" fill="#4490f4" opacity="0.7"/>
<line x1="171.5" y1="337" x2="171.5" y2="372" stroke="#22a0f0" stroke-width="1.1" opacity="1"/>
<line x1="174" y1="337" x2="174" y2="372" stroke="#22a0f0" stroke-width="1.1" opacity="1"/>
<line x1="172.5" y1="372" x2="172.5" y2="378" stroke="#d23ff0" stroke-width="1.1" opacity="0.85"/>
<rect x="178.2" y="274" width="1.5" height="20" fill="#7048c0" opacity="0.5"/>
<line x1="177.79999999999998" y1="273" x2="177.79999999999998" y2="294" stroke="#d23ff0" stroke-width="1.3" opacity="1"/>
<line x1="180.2" y1="273" x2="180.2" y2="294" stroke="#d23ff0" stroke-width="1.3" opacity="1"/>
<line x1="177.2" y1="273.6" x2="180.79999999999998" y2="273.6" stroke="#d23ff0" stroke-width="1.2" opacity="1"/>
<rect x="177.5" y="294" width="2.4" height="31" fill="#8070f4" opacity="1"/>
<line x1="180.5" y1="294" x2="180.5" y2="325" stroke="#c844f0" stroke-width="1.4" opacity="0.9"/>
<rect x="177.7" y="325" width="2" height="12" fill="#6a54d8" opacity="0.8"/>
<rect x="179.89999999999998" y="325" width="1.5" height="12" fill="#d040f0" opacity="0.9"/>
<rect x="178.2" y="337" width="1.6" height="35" fill="#4490f4" opacity="0.7"/>
<line x1="177.7" y1="337" x2="177.7" y2="372" stroke="#22a0f0" stroke-width="1.1" opacity="1"/>
<line x1="180.2" y1="337" x2="180.2" y2="372" stroke="#22a0f0" stroke-width="1.1" opacity="1"/>
<line x1="178.7" y1="372" x2="178.7" y2="377.1" stroke="#d23ff0" stroke-width="1.1" opacity="0.85"/>
<rect x="184.39999999999998" y="274" width="2.0" height="20" fill="#7048c0" opacity="0.5"/>
<line x1="183.99999999999997" y1="273" x2="183.99999999999997" y2="294" stroke="#d23ff0" stroke-width="1.3" opacity="1"/>
<line x1="186.89999999999998" y1="273" x2="186.89999999999998" y2="294" stroke="#d23ff0" stroke-width="1.3" opacity="1"/>
<line x1="183.39999999999998" y1="273.6" x2="187.49999999999997" y2="273.6" stroke="#d23ff0" stroke-width="1.2" opacity="1"/>
<line x1="188.24999999999997" y1="273" x2="188.24999999999997" y2="294" stroke="#d23ff0" stroke-width="1" opacity="0.5"/>
<rect x="183.7" y="294" width="2.4" height="31" fill="#8070f4" opacity="1"/>
<line x1="187.2" y1="294" x2="187.2" y2="325" stroke="#c844f0" stroke-width="1.4" opacity="0.9"/>
<rect x="183.89999999999998" y="325" width="2" height="12" fill="#6a54d8" opacity="0.8"/>
<rect x="186.59999999999997" y="325" width="1.5" height="12" fill="#d040f0" opacity="0.9"/>
<rect x="184.39999999999998" y="337" width="1.6" height="35" fill="#4490f4" opacity="0.7"/>
<line x1="183.89999999999998" y1="337" x2="183.89999999999998" y2="372" stroke="#22a0f0" stroke-width="1.1" opacity="1"/>
<line x1="186.89999999999998" y1="337" x2="186.89999999999998" y2="372" stroke="#22a0f0" stroke-width="1.1" opacity="1"/>
<line x1="185.14999999999998" y1="372" x2="185.14999999999998" y2="378" stroke="#d23ff0" stroke-width="1.1" opacity="0.85"/>
<rect x="171" y="273" width="5.4" height="99" fill="#6a5ad8" opacity="0.0"/>
<line x1="171.5" y1="226" x2="171.5" y2="372" stroke="#1ea2f0" stroke-width="1" opacity="0.95"/>
<line x1="174.0" y1="226" x2="174.0" y2="372" stroke="#1ea2f0" stroke-width="1" opacity="0.95"/>
<line x1="171" y1="226.5" x2="174.5" y2="226.5" stroke="#1ea2f0" stroke-width="1" opacity="0.95"/>
<line x1="175.0" y1="273" x2="175.0" y2="420" stroke="#d23ff0" stroke-width="1" opacity="0.9"/>
<line x1="175.9" y1="273" x2="175.9" y2="420" stroke="#d23ff0" stroke-width="1" opacity="0.9"/>
<line x1="174.5" y1="419.5" x2="176.4" y2="419.5" stroke="#d23ff0" stroke-width="1" opacity="0.9"/>
<rect x="176.4" y="273" width="5.4" height="99" fill="#6a5ad8" opacity="0.0"/>
<rect x="176.9" y="341.88091360958197" width="2" height="25" fill="#3a90f0" opacity="0.6"/>
<line x1="176.9" y1="226" x2="176.9" y2="372" stroke="#1ea2f0" stroke-width="1" opacity="0.95"/>
<line x1="179.4" y1="226" x2="179.4" y2="372" stroke="#1ea2f0" stroke-width="1" opacity="0.95"/>
<line x1="176.4" y1="226.5" x2="179.9" y2="226.5" stroke="#1ea2f0" stroke-width="1" opacity="0.95"/>
<line x1="180.4" y1="273" x2="180.4" y2="420" stroke="#d23ff0" stroke-width="1" opacity="0.9"/>
<line x1="181.3" y1="273" x2="181.3" y2="420" stroke="#d23ff0" stroke-width="1" opacity="0.9"/>
<line x1="179.9" y1="419.5" x2="181.8" y2="419.5" stroke="#d23ff0" stroke-width="1" opacity="0.9"/>
<rect x="181.8" y="273" width="5.4" height="99" fill="#6a5ad8" opacity="0.0"/>
<rect x="184.8" y="276.62682149967355" width="1.5" height="44.289336031015324" fill="#d040f0" opacity="0.6"/>
<line x1="182.3" y1="226" x2="182.3" y2="372" stroke="#1ea2f0" stroke-width="1" opacity="0.95"/>
<line x1="184.3" y1="226" x2="184.3" y2="372" stroke="#1ea2f0" stroke-width="1" opacity="0.95"/>
<line x1="181.8" y1="226.5" x2="184.8" y2="226.5" stroke="#1ea2f0" stroke-width="1" opacity="0.95"/>
<line x1="185.3" y1="273" x2="185.3" y2="420" stroke="#d23ff0" stroke-width="1" opacity="0.9"/>
<line x1="186.70000000000002" y1="273" x2="186.70000000000002" y2="420" stroke="#d23ff0" stroke-width="1" opacity="0.9"/>
<line x1="184.8" y1="419.5" x2="187.20000000000002" y2="419.5" stroke="#d23ff0" stroke-width="1" opacity="0.9"/>
<rect x="187.20000000000002" y="273" width="5.4" height="99" fill="#6a5ad8" opacity="0.0"/>
<rect x="189.70000000000002" y="291.1197946232326" width="1.5" height="42.16747640421153" fill="#d040f0" opacity="0.6"/>
<line x1="187.70000000000002" y1="226" x2="187.70000000000002" y2="372" stroke="#1ea2f0" stroke-width="1" opacity="0.95"/>
<line x1="189.20000000000002" y1="226" x2="189.20000000000002" y2="372" stroke="#1ea2f0" stroke-width="1" opacity="0.95"/>
<line x1="187.20000000000002" y1="226.5" x2="189.70000000000002" y2="226.5" stroke="#1ea2f0" stroke-width="1" opacity="0.95"/>
<line x1="190.20000000000002" y1="273" x2="190.20000000000002" y2="420" stroke="#d23ff0" stroke-width="1" opacity="0.9"/>
<line x1="192.10000000000002" y1="273" x2="192.10000000000002" y2="420" stroke="#d23ff0" stroke-width="1" opacity="0.9"/>
<line x1="189.70000000000002" y1="419.5" x2="192.60000000000002" y2="419.5" stroke="#d23ff0" stroke-width="1" opacity="0.9"/>
<line x1="189.5" y1="226" x2="189.5" y2="420" stroke="#1ea2f0" stroke-width="1" opacity="0.9"/>
<line x1="299.5" y1="226" x2="299.5" y2="265" stroke="#1ea2f0" stroke-width="1.2" opacity="1"/>
<line x1="299.5" y1="265" x2="301" y2="271" stroke="#1ea2f0" stroke-width="1.2" opacity="1"/>
<line x1="296.5" y1="420" x2="300.5" y2="396" stroke="#d23ff0" stroke-width="1.2" opacity="1"/>
<line x1="300.5" y1="396" x2="300.5" y2="272" stroke="#d23ff0" stroke-width="1.2" opacity="1"/>
<rect x="302" y="273" width="1.0" height="19" fill="#7048c0" opacity="0.5"/>
<line x1="301.6" y1="272" x2="301.6" y2="292" stroke="#d23ff0" stroke-width="1.3" opacity="1"/>
<line x1="303.5" y1="272" x2="303.5" y2="292" stroke="#d23ff0" stroke-width="1.3" opacity="1"/>
<line x1="301" y1="272.6" x2="304.1" y2="272.6" stroke="#d23ff0" stroke-width="1.2" opacity="1"/>
<line x1="305.35" y1="272" x2="305.35" y2="292" stroke="#d23ff0" stroke-width="1" opacity="0.5"/>
<rect x="301.3" y="292" width="2.4" height="33" fill="#8070f4" opacity="1"/>
<line x1="303.8" y1="292" x2="303.8" y2="325" stroke="#c844f0" stroke-width="1.4" opacity="0.9"/>
<rect x="301.5" y="325" width="2" height="20" fill="#6a54d8" opacity="0.8"/>
<rect x="303.2" y="325" width="1.5" height="20" fill="#d040f0" opacity="0.9"/>
<rect x="302" y="345" width="1.6" height="27" fill="#4490f4" opacity="0.7"/>
<line x1="301.5" y1="345" x2="301.5" y2="372" stroke="#22a0f0" stroke-width="1.1" opacity="1"/>
<line x1="303.5" y1="345" x2="303.5" y2="372" stroke="#22a0f0" stroke-width="1.1" opacity="1"/>
<line x1="303.0" y1="372" x2="303.0" y2="396" stroke="#d23ff0" stroke-width="1.1" opacity="0.85"/>
<line x1="305.0" y1="372" x2="305.0" y2="396" stroke="#d23ff0" stroke-width="1.1" opacity="0.7"/>
<line x1="303.0" y1="395.5" x2="305.5" y2="395.5" stroke="#d23ff0" stroke-width="1" opacity="0.8"/>
<line x1="303.5" y1="372.5" x2="307.2" y2="372.5" stroke="#1ea2f0" stroke-width="1" opacity="0.85"/>
<rect x="308.2" y="273" width="1.5" height="19" fill="#7048c0" opacity="0.5"/>
<line x1="307.8" y1="272" x2="307.8" y2="292" stroke="#d23ff0" stroke-width="1.3" opacity="1"/>
<line x1="310.2" y1="272" x2="310.2" y2="292" stroke="#d23ff0" stroke-width="1.3" opacity="1"/>
<line x1="307.2" y1="272.6" x2="310.8" y2="272.6" stroke="#d23ff0" stroke-width="1.2" opacity="1"/>
<line x1="311.8" y1="272" x2="311.8" y2="292" stroke="#d23ff0" stroke-width="1" opacity="0.5"/>
<rect x="307.5" y="292" width="2.4" height="33" fill="#8070f4" opacity="1"/>
<line x1="310.5" y1="292" x2="310.5" y2="325" stroke="#c844f0" stroke-width="1.4" opacity="0.9"/>
<rect x="307.7" y="325" width="2" height="20" fill="#6a54d8" opacity="0.8"/>
<rect x="309.9" y="325" width="1.5" height="20" fill="#d040f0" opacity="0.9"/>
<rect x="308.2" y="345" width="1.6" height="27" fill="#4490f4" opacity="0.7"/>
<line x1="307.7" y1="345" x2="307.7" y2="372" stroke="#22a0f0" stroke-width="1.1" opacity="1"/>
<line x1="310.2" y1="345" x2="310.2" y2="372" stroke="#22a0f0" stroke-width="1.1" opacity="1"/>
<line x1="311.7" y1="345" x2="311.7" y2="372" stroke="#d23ff0" stroke-width="1" opacity="0.5"/>
<line x1="309.7" y1="372" x2="309.7" y2="396" stroke="#d23ff0" stroke-width="1.1" opacity="0.85"/>
<line x1="311.7" y1="372" x2="311.7" y2="396" stroke="#d23ff0" stroke-width="1.1" opacity="0.7"/>
<line x1="309.7" y1="395.5" x2="312.2" y2="395.5" stroke="#d23ff0" stroke-width="1" opacity="0.8"/>
<line x1="310.2" y1="372.5" x2="313.4" y2="372.5" stroke="#1ea2f0" stroke-width="1" opacity="0.85"/>
<rect x="314.4" y="273" width="1.5" height="19" fill="#7048c0" opacity="0.5"/>
<line x1="314.0" y1="272" x2="314.0" y2="292" stroke="#d23ff0" stroke-width="1.3" opacity="1"/>
<line x1="316.4" y1="272" x2="316.4" y2="292" stroke="#d23ff0" stroke-width="1.3" opacity="1"/>
<line x1="313.4" y1="272.6" x2="317.0" y2="272.6" stroke="#d23ff0" stroke-width="1.2" opacity="1"/>
<rect x="313.7" y="292" width="2.4" height="33" fill="#8070f4" opacity="1"/>
<line x1="316.7" y1="292" x2="316.7" y2="325" stroke="#c844f0" stroke-width="1.4" opacity="0.9"/>
<rect x="313.9" y="325" width="2" height="20" fill="#6a54d8" opacity="0.8"/>
<rect x="316.09999999999997" y="325" width="1.5" height="20" fill="#d040f0" opacity="0.9"/>
<rect x="314.4" y="345" width="1.6" height="27" fill="#4490f4" opacity="0.7"/>
<line x1="313.9" y1="345" x2="313.9" y2="372" stroke="#22a0f0" stroke-width="1.1" opacity="1"/>
<line x1="316.4" y1="345" x2="316.4" y2="372" stroke="#22a0f0" stroke-width="1.1" opacity="1"/>
<line x1="315.9" y1="372" x2="315.9" y2="396" stroke="#d23ff0" stroke-width="1.1" opacity="0.85"/>
<line x1="315.9" y1="395.5" x2="318.4" y2="395.5" stroke="#d23ff0" stroke-width="1" opacity="0.8"/>
<line x1="316.4" y1="372.5" x2="319.59999999999997" y2="372.5" stroke="#1ea2f0" stroke-width="1" opacity="0.85"/>
<rect x="320.59999999999997" y="273" width="1.900000000000034" height="19" fill="#7048c0" opacity="0.5"/>
<line x1="320.2" y1="272" x2="320.2" y2="292" stroke="#d23ff0" stroke-width="1.3" opacity="1"/>
<line x1="323.0" y1="272" x2="323.0" y2="292" stroke="#d23ff0" stroke-width="1.3" opacity="1"/>
<line x1="319.59999999999997" y1="272.6" x2="323.6" y2="272.6" stroke="#d23ff0" stroke-width="1.2" opacity="1"/>
<rect x="319.9" y="292" width="2.4" height="33" fill="#8070f4" opacity="1"/>
<line x1="323.3" y1="292" x2="323.3" y2="325" stroke="#c844f0" stroke-width="1.4" opacity="0.9"/>
<rect x="320.09999999999997" y="325" width="2" height="20" fill="#6a54d8" opacity="0.8"/>
<rect x="322.7" y="325" width="1.5" height="20" fill="#d040f0" opacity="0.9"/>
<rect x="320.59999999999997" y="345" width="1.6" height="27" fill="#4490f4" opacity="0.7"/>
<line x1="320.09999999999997" y1="345" x2="320.09999999999997" y2="372" stroke="#22a0f0" stroke-width="1.1" opacity="1"/>
<line x1="323.0" y1="345" x2="323.0" y2="372" stroke="#22a0f0" stroke-width="1.1" opacity="1"/>
<line x1="322.5" y1="372" x2="322.5" y2="396" stroke="#d23ff0" stroke-width="1.1" opacity="0.85"/>
<line x1="324.5" y1="372" x2="324.5" y2="396" stroke="#d23ff0" stroke-width="1.1" opacity="0.7"/>
<line x1="322.5" y1="395.5" x2="325.0" y2="395.5" stroke="#d23ff0" stroke-width="1" opacity="0.8"/>
<line x1="323.0" y1="372.5" x2="325.79999999999995" y2="372.5" stroke="#1ea2f0" stroke-width="1" opacity="0.85"/>
<rect x="324" y="273" width="1.5" height="19" fill="#7048c0" opacity="0.5"/>
<line x1="323.6" y1="272" x2="323.6" y2="292" stroke="#d23ff0" stroke-width="1.3" opacity="1"/>
<line x1="326" y1="272" x2="326" y2="292" stroke="#d23ff0" stroke-width="1.3" opacity="1"/>
<line x1="323" y1="272.6" x2="326.6" y2="272.6" stroke="#d23ff0" stroke-width="1.2" opacity="1"/>
<line x1="327.4" y1="272" x2="327.4" y2="292" stroke="#d23ff0" stroke-width="1" opacity="0.5"/>
<rect x="323.3" y="292" width="2.4" height="33" fill="#8070f4" opacity="1"/>
<line x1="326.3" y1="292" x2="326.3" y2="325" stroke="#c844f0" stroke-width="1.4" opacity="0.9"/>
<rect x="323.5" y="325" width="2" height="20" fill="#6a54d8" opacity="0.8"/>
<rect x="325.7" y="325" width="1.5" height="20" fill="#d040f0" opacity="0.9"/>
<rect x="324" y="345" width="1.6" height="27" fill="#4490f4" opacity="0.7"/>
<line x1="323.5" y1="345" x2="323.5" y2="372" stroke="#22a0f0" stroke-width="1.1" opacity="1"/>
<line x1="326" y1="345" x2="326" y2="372" stroke="#22a0f0" stroke-width="1.1" opacity="1"/>
<rect x="329.8" y="273" width="1.5" height="19" fill="#7048c0" opacity="0.5"/>
<line x1="329.40000000000003" y1="272" x2="329.40000000000003" y2="292" stroke="#d23ff0" stroke-width="1.3" opacity="1"/>
<line x1="331.8" y1="272" x2="331.8" y2="292" stroke="#d23ff0" stroke-width="1.3" opacity="1"/>
<line x1="328.8" y1="272.6" x2="332.40000000000003" y2="272.6" stroke="#d23ff0" stroke-width="1.2" opacity="1"/>
<line x1="333.2" y1="272" x2="333.2" y2="292" stroke="#d23ff0" stroke-width="1" opacity="0.5"/>
<rect x="329.1" y="292" width="2.4" height="33" fill="#8070f4" opacity="1"/>
<line x1="332.1" y1="292" x2="332.1" y2="325" stroke="#c844f0" stroke-width="1.4" opacity="0.9"/>
<rect x="329.3" y="325" width="2" height="20" fill="#6a54d8" opacity="0.8"/>
<rect x="331.5" y="325" width="1.5" height="20" fill="#d040f0" opacity="0.9"/>
<rect x="329.8" y="345" width="1.6" height="27" fill="#4490f4" opacity="0.7"/>
<line x1="329.3" y1="345" x2="329.3" y2="372" stroke="#22a0f0" stroke-width="1.1" opacity="1"/>
<line x1="331.8" y1="345" x2="331.8" y2="372" stroke="#22a0f0" stroke-width="1.1" opacity="1"/>
<line x1="333.3" y1="345" x2="333.3" y2="372" stroke="#d23ff0" stroke-width="1" opacity="0.5"/>
<rect x="335.6" y="273" width="1.5" height="19" fill="#7048c0" opacity="0.5"/>
<line x1="335.20000000000005" y1="272" x2="335.20000000000005" y2="292" stroke="#d23ff0" stroke-width="1.3" opacity="1"/>
<line x1="337.6" y1="272" x2="337.6" y2="292" stroke="#d23ff0" stroke-width="1.3" opacity="1"/>
<line x1="334.6" y1="272.6" x2="338.20000000000005" y2="272.6" stroke="#d23ff0" stroke-width="1.2" opacity="1"/>
<rect x="334.90000000000003" y="292" width="2.4" height="33" fill="#8070f4" opacity="1"/>
<line x1="337.90000000000003" y1="292" x2="337.90000000000003" y2="325" stroke="#c844f0" stroke-width="1.4" opacity="0.9"/>
<rect x="335.1" y="325" width="2" height="20" fill="#6a54d8" opacity="0.8"/>
<rect x="337.3" y="325" width="1.5" height="20" fill="#d040f0" opacity="0.9"/>
<rect x="335.6" y="345" width="1.6" height="27" fill="#4490f4" opacity="0.7"/>
<line x1="335.1" y1="345" x2="335.1" y2="372" stroke="#22a0f0" stroke-width="1.1" opacity="1"/>
<line x1="337.6" y1="345" x2="337.6" y2="372" stroke="#22a0f0" stroke-width="1.1" opacity="1"/>
<line x1="339.1" y1="345" x2="339.1" y2="372" stroke="#d23ff0" stroke-width="1" opacity="0.5"/>
<rect x="341.40000000000003" y="273" width="1.5" height="19" fill="#7048c0" opacity="0.5"/>
<line x1="341.00000000000006" y1="272" x2="341.00000000000006" y2="292" stroke="#d23ff0" stroke-width="1.3" opacity="1"/>
<line x1="343.40000000000003" y1="272" x2="343.40000000000003" y2="292" stroke="#d23ff0" stroke-width="1.3" opacity="1"/>
<line x1="340.40000000000003" y1="272.6" x2="344.00000000000006" y2="272.6" stroke="#d23ff0" stroke-width="1.2" opacity="1"/>
<rect x="340.70000000000005" y="292" width="2.4" height="33" fill="#8070f4" opacity="1"/>
<line x1="343.70000000000005" y1="292" x2="343.70000000000005" y2="325" stroke="#c844f0" stroke-width="1.4" opacity="0.9"/>
<rect x="340.90000000000003" y="325" width="2" height="20" fill="#6a54d8" opacity="0.8"/>
<rect x="343.1" y="325" width="1.5" height="20" fill="#d040f0" opacity="0.9"/>
<rect x="341.40000000000003" y="345" width="1.6" height="27" fill="#4490f4" opacity="0.7"/>
<line x1="340.90000000000003" y1="345" x2="340.90000000000003" y2="372" stroke="#22a0f0" stroke-width="1.1" opacity="1"/>
<line x1="343.40000000000003" y1="345" x2="343.40000000000003" y2="372" stroke="#22a0f0" stroke-width="1.1" opacity="1"/>
<rect x="347.20000000000005" y="273" width="0.2999999999999545" height="19" fill="#7048c0" opacity="0.5"/>
<line x1="346.80000000000007" y1="272" x2="346.80000000000007" y2="292" stroke="#d23ff0" stroke-width="1.3" opacity="1"/>
<line x1="348.0" y1="272" x2="348.0" y2="292" stroke="#d23ff0" stroke-width="1.3" opacity="1"/>
<line x1="346.20000000000005" y1="272.6" x2="348.6" y2="272.6" stroke="#d23ff0" stroke-width="1.2" opacity="1"/>
<line x1="350.0" y1="272" x2="350.0" y2="292" stroke="#d23ff0" stroke-width="1" opacity="0.5"/>
<rect x="346.50000000000006" y="292" width="2.4" height="33" fill="#8070f4" opacity="1"/>
<line x1="348.3" y1="292" x2="348.3" y2="325" stroke="#c844f0" stroke-width="1.4" opacity="0.9"/>
<rect x="346.70000000000005" y="325" width="2" height="20" fill="#6a54d8" opacity="0.8"/>
<rect x="347.7" y="325" width="1.5" height="20" fill="#d040f0" opacity="0.9"/>
<rect x="347.20000000000005" y="345" width="1.6" height="27" fill="#4490f4" opacity="0.7"/>
<line x1="346.70000000000005" y1="345" x2="346.70000000000005" y2="372" stroke="#22a0f0" stroke-width="1.1" opacity="1"/>
<line x1="348.0" y1="345" x2="348.0" y2="372" stroke="#22a0f0" stroke-width="1.1" opacity="1"/>
<rect x="323" y="272" width="5.8" height="100" fill="#6a5ad8" opacity="0.0"/>
<rect x="323.5" y="343.1835897705808" width="2" height="25" fill="#3a90f0" opacity="0.6"/>
<line x1="323.5" y1="226" x2="323.5" y2="372" stroke="#1ea2f0" stroke-width="1" opacity="0.95"/>
<line x1="326.0" y1="226" x2="326.0" y2="372" stroke="#1ea2f0" stroke-width="1" opacity="0.95"/>
<line x1="323" y1="226.5" x2="326.5" y2="226.5" stroke="#1ea2f0" stroke-width="1" opacity="0.95"/>
<line x1="327.0" y1="272" x2="327.0" y2="420" stroke="#d23ff0" stroke-width="1" opacity="0.9"/>
<line x1="328.3" y1="272" x2="328.3" y2="420" stroke="#d23ff0" stroke-width="1" opacity="0.9"/>
<line x1="326.5" y1="419.5" x2="328.8" y2="419.5" stroke="#d23ff0" stroke-width="1" opacity="0.9"/>
<rect x="328.8" y="272" width="5.8" height="100" fill="#6a5ad8" opacity="0.0"/>
<rect x="329.3" y="338.35655458260646" width="2" height="25" fill="#3a90f0" opacity="0.6"/>
<line x1="329.3" y1="226" x2="329.3" y2="372" stroke="#1ea2f0" stroke-width="1" opacity="0.95"/>
<line x1="331.3" y1="226" x2="331.3" y2="372" stroke="#1ea2f0" stroke-width="1" opacity="0.95"/>
<line x1="328.8" y1="226.5" x2="331.8" y2="226.5" stroke="#1ea2f0" stroke-width="1" opacity="0.95"/>
<line x1="332.3" y1="272" x2="332.3" y2="420" stroke="#d23ff0" stroke-width="1" opacity="0.9"/>
<line x1="334.1" y1="272" x2="334.1" y2="420" stroke="#d23ff0" stroke-width="1" opacity="0.9"/>
<line x1="331.8" y1="419.5" x2="334.6" y2="419.5" stroke="#d23ff0" stroke-width="1" opacity="0.9"/>
<rect x="334.6" y="272" width="5.8" height="100" fill="#6a5ad8" opacity="0.0"/>
<rect x="335.1" y="342.5994520807523" width="2" height="25" fill="#3a90f0" opacity="0.6"/>
<line x1="335.1" y1="226" x2="335.1" y2="372" stroke="#1ea2f0" stroke-width="1" opacity="0.95"/>
<line x1="337.1" y1="226" x2="337.1" y2="372" stroke="#1ea2f0" stroke-width="1" opacity="0.95"/>
<line x1="334.6" y1="226.5" x2="337.6" y2="226.5" stroke="#1ea2f0" stroke-width="1" opacity="0.95"/>
<line x1="338.1" y1="272" x2="338.1" y2="420" stroke="#d23ff0" stroke-width="1" opacity="0.9"/>
<line x1="339.90000000000003" y1="272" x2="339.90000000000003" y2="420" stroke="#d23ff0" stroke-width="1" opacity="0.9"/>
<line x1="337.6" y1="419.5" x2="340.40000000000003" y2="419.5" stroke="#d23ff0" stroke-width="1" opacity="0.9"/>
<rect x="340.40000000000003" y="272" width="5.8" height="100" fill="#6a5ad8" opacity="0.0"/>
<rect x="343.40000000000003" y="295.0485832151235" width="1.5" height="25.9890072959534" fill="#d040f0" opacity="0.6"/>
<line x1="340.90000000000003" y1="226" x2="340.90000000000003" y2="372" stroke="#1ea2f0" stroke-width="1" opacity="0.95"/>
<line x1="342.90000000000003" y1="226" x2="342.90000000000003" y2="372" stroke="#1ea2f0" stroke-width="1" opacity="0.95"/>
<line x1="340.40000000000003" y1="226.5" x2="343.40000000000003" y2="226.5" stroke="#1ea2f0" stroke-width="1" opacity="0.95"/>
<line x1="343.90000000000003" y1="272" x2="343.90000000000003" y2="420" stroke="#d23ff0" stroke-width="1" opacity="0.9"/>
<line x1="345.70000000000005" y1="272" x2="345.70000000000005" y2="420" stroke="#d23ff0" stroke-width="1" opacity="0.9"/>
<line x1="343.40000000000003" y1="419.5" x2="346.20000000000005" y2="419.5" stroke="#d23ff0" stroke-width="1" opacity="0.9"/>
<rect x="346.20000000000005" y="272" width="5.8" height="100" fill="#6a5ad8" opacity="0.0"/>
<rect x="346.70000000000005" y="337.8109328850519" width="2" height="25" fill="#3a90f0" opacity="0.6"/>
<line x1="346.70000000000005" y1="226" x2="346.70000000000005" y2="372" stroke="#1ea2f0" stroke-width="1" opacity="0.95"/>
<line x1="347.5" y1="226" x2="347.5" y2="372" stroke="#1ea2f0" stroke-width="1" opacity="0.95"/>
<line x1="346.20000000000005" y1="226.5" x2="348.0" y2="226.5" stroke="#1ea2f0" stroke-width="1" opacity="0.95"/>
<line x1="348.5" y1="272" x2="348.5" y2="420" stroke="#d23ff0" stroke-width="1" opacity="0.9"/>
<line x1="351.50000000000006" y1="272" x2="351.50000000000006" y2="420" stroke="#d23ff0" stroke-width="1" opacity="0.9"/>
<line x1="348.0" y1="419.5" x2="352.00000000000006" y2="419.5" stroke="#d23ff0" stroke-width="1" opacity="0.9"/>
<rect x="350" y="273" width="1.5" height="19" fill="#7048c0" opacity="0.5"/>
<line x1="349.6" y1="272" x2="349.6" y2="292" stroke="#d23ff0" stroke-width="1.3" opacity="1"/>
<line x1="352" y1="272" x2="352" y2="292" stroke="#d23ff0" stroke-width="1.3" opacity="1"/>
<line x1="349" y1="272.6" x2="352.6" y2="272.6" stroke="#d23ff0" stroke-width="1.2" opacity="1"/>
<rect x="349.3" y="292" width="2.4" height="26" fill="#8070f4" opacity="1"/>
<line x1="352.3" y1="292" x2="352.3" y2="318" stroke="#c844f0" stroke-width="1.4" opacity="0.9"/>
<rect x="349.5" y="318" width="2" height="27" fill="#6a54d8" opacity="0.8"/>
<rect x="351.7" y="318" width="1.5" height="27" fill="#d040f0" opacity="0.9"/>
<rect x="350" y="345" width="1.6" height="27" fill="#4490f4" opacity="0.7"/>
<line x1="349.5" y1="345" x2="349.5" y2="372" stroke="#22a0f0" stroke-width="1.1" opacity="1"/>
<line x1="352" y1="345" x2="352" y2="372" stroke="#22a0f0" stroke-width="1.1" opacity="1"/>
<line x1="353.5" y1="345" x2="353.5" y2="372" stroke="#d23ff0" stroke-width="1" opacity="0.5"/>
<line x1="351.5" y1="372" x2="351.5" y2="396" stroke="#d23ff0" stroke-width="1.1" opacity="0.85"/>
<line x1="351.5" y1="395.5" x2="354" y2="395.5" stroke="#d23ff0" stroke-width="1" opacity="0.8"/>
<line x1="352" y1="372.5" x2="355.2" y2="372.5" stroke="#1ea2f0" stroke-width="1" opacity="0.85"/>
<rect x="356.2" y="273" width="1.5" height="19" fill="#7048c0" opacity="0.5"/>
<line x1="355.8" y1="272" x2="355.8" y2="292" stroke="#d23ff0" stroke-width="1.3" opacity="1"/>
<line x1="358.2" y1="272" x2="358.2" y2="292" stroke="#d23ff0" stroke-width="1.3" opacity="1"/>
<line x1="355.2" y1="272.6" x2="358.8" y2="272.6" stroke="#d23ff0" stroke-width="1.2" opacity="1"/>
<rect x="355.5" y="292" width="2.4" height="26" fill="#8070f4" opacity="1"/>
<line x1="358.5" y1="292" x2="358.5" y2="318" stroke="#c844f0" stroke-width="1.4" opacity="0.9"/>
<rect x="355.7" y="318" width="2" height="27" fill="#6a54d8" opacity="0.8"/>
<rect x="357.9" y="318" width="1.5" height="27" fill="#d040f0" opacity="0.9"/>
<rect x="356.2" y="345" width="1.6" height="27" fill="#4490f4" opacity="0.7"/>
<line x1="355.7" y1="345" x2="355.7" y2="372" stroke="#22a0f0" stroke-width="1.1" opacity="1"/>
<line x1="358.2" y1="345" x2="358.2" y2="372" stroke="#22a0f0" stroke-width="1.1" opacity="1"/>
<line x1="359.7" y1="345" x2="359.7" y2="372" stroke="#d23ff0" stroke-width="1" opacity="0.5"/>
<line x1="357.7" y1="372" x2="357.7" y2="396" stroke="#d23ff0" stroke-width="1.1" opacity="0.85"/>
<line x1="359.7" y1="372" x2="359.7" y2="396" stroke="#d23ff0" stroke-width="1.1" opacity="0.7"/>
<line x1="357.7" y1="395.5" x2="360.2" y2="395.5" stroke="#d23ff0" stroke-width="1" opacity="0.8"/>
<line x1="358.2" y1="372.5" x2="361.4" y2="372.5" stroke="#1ea2f0" stroke-width="1" opacity="0.85"/>
<rect x="362.4" y="273" width="1.5" height="19" fill="#7048c0" opacity="0.5"/>
<line x1="362.0" y1="272" x2="362.0" y2="292" stroke="#d23ff0" stroke-width="1.3" opacity="1"/>
<line x1="364.4" y1="272" x2="364.4" y2="292" stroke="#d23ff0" stroke-width="1.3" opacity="1"/>
<line x1="361.4" y1="272.6" x2="365.0" y2="272.6" stroke="#d23ff0" stroke-width="1.2" opacity="1"/>
<line x1="366.0" y1="272" x2="366.0" y2="292" stroke="#d23ff0" stroke-width="1" opacity="0.5"/>
<rect x="361.7" y="292" width="2.4" height="26" fill="#8070f4" opacity="1"/>
<line x1="364.7" y1="292" x2="364.7" y2="318" stroke="#c844f0" stroke-width="1.4" opacity="0.9"/>
<rect x="361.9" y="318" width="2" height="27" fill="#6a54d8" opacity="0.8"/>
<rect x="364.09999999999997" y="318" width="1.5" height="27" fill="#d040f0" opacity="0.9"/>
<rect x="362.4" y="345" width="1.6" height="27" fill="#4490f4" opacity="0.7"/>
<line x1="361.9" y1="345" x2="361.9" y2="372" stroke="#22a0f0" stroke-width="1.1" opacity="1"/>
<line x1="364.4" y1="345" x2="364.4" y2="372" stroke="#22a0f0" stroke-width="1.1" opacity="1"/>
<line x1="365.9" y1="345" x2="365.9" y2="372" stroke="#d23ff0" stroke-width="1" opacity="0.5"/>
<line x1="363.9" y1="372" x2="363.9" y2="396" stroke="#d23ff0" stroke-width="1.1" opacity="0.85"/>
<line x1="363.9" y1="395.5" x2="366.4" y2="395.5" stroke="#d23ff0" stroke-width="1" opacity="0.8"/>
<line x1="364.4" y1="372.5" x2="367.59999999999997" y2="372.5" stroke="#1ea2f0" stroke-width="1" opacity="0.85"/>
<rect x="368.59999999999997" y="273" width="1.5" height="19" fill="#7048c0" opacity="0.5"/>
<line x1="368.2" y1="272" x2="368.2" y2="292" stroke="#d23ff0" stroke-width="1.3" opacity="1"/>
<line x1="370.59999999999997" y1="272" x2="370.59999999999997" y2="292" stroke="#d23ff0" stroke-width="1.3" opacity="1"/>
<line x1="367.59999999999997" y1="272.6" x2="371.2" y2="272.6" stroke="#d23ff0" stroke-width="1.2" opacity="1"/>
<rect x="367.9" y="292" width="2.4" height="26" fill="#8070f4" opacity="1"/>
<line x1="370.9" y1="292" x2="370.9" y2="318" stroke="#c844f0" stroke-width="1.4" opacity="0.9"/>
<rect x="368.09999999999997" y="318" width="2" height="27" fill="#6a54d8" opacity="0.8"/>
<rect x="370.29999999999995" y="318" width="1.5" height="27" fill="#d040f0" opacity="0.9"/>
<rect x="368.59999999999997" y="345" width="1.6" height="27" fill="#4490f4" opacity="0.7"/>
<line x1="368.09999999999997" y1="345" x2="368.09999999999997" y2="372" stroke="#22a0f0" stroke-width="1.1" opacity="1"/>
<line x1="370.59999999999997" y1="345" x2="370.59999999999997" y2="372" stroke="#22a0f0" stroke-width="1.1" opacity="1"/>
<line x1="370.09999999999997" y1="372" x2="370.09999999999997" y2="396" stroke="#d23ff0" stroke-width="1.1" opacity="0.85"/>
<line x1="372.09999999999997" y1="372" x2="372.09999999999997" y2="396" stroke="#d23ff0" stroke-width="1.1" opacity="0.7"/>
<line x1="370.09999999999997" y1="395.5" x2="372.59999999999997" y2="395.5" stroke="#d23ff0" stroke-width="1" opacity="0.8"/>
<line x1="370.59999999999997" y1="372.5" x2="373.79999999999995" y2="372.5" stroke="#1ea2f0" stroke-width="1" opacity="0.85"/>
<rect x="374.79999999999995" y="273" width="1.5" height="19" fill="#7048c0" opacity="0.5"/>
<line x1="374.4" y1="272" x2="374.4" y2="292" stroke="#d23ff0" stroke-width="1.3" opacity="1"/>
<line x1="376.79999999999995" y1="272" x2="376.79999999999995" y2="292" stroke="#d23ff0" stroke-width="1.3" opacity="1"/>
<line x1="373.79999999999995" y1="272.6" x2="377.4" y2="272.6" stroke="#d23ff0" stroke-width="1.2" opacity="1"/>
<line x1="378.4" y1="272" x2="378.4" y2="292" stroke="#d23ff0" stroke-width="1" opacity="0.5"/>
<rect x="374.09999999999997" y="292" width="2.4" height="26" fill="#8070f4" opacity="1"/>
<line x1="377.09999999999997" y1="292" x2="377.09999999999997" y2="318" stroke="#c844f0" stroke-width="1.4" opacity="0.9"/>
<rect x="374.29999999999995" y="318" width="2" height="27" fill="#6a54d8" opacity="0.8"/>
<rect x="376.49999999999994" y="318" width="1.5" height="27" fill="#d040f0" opacity="0.9"/>
<rect x="374.79999999999995" y="345" width="1.6" height="27" fill="#4490f4" opacity="0.7"/>
<line x1="374.29999999999995" y1="345" x2="374.29999999999995" y2="372" stroke="#22a0f0" stroke-width="1.1" opacity="1"/>
<line x1="376.79999999999995" y1="345" x2="376.79999999999995" y2="372" stroke="#22a0f0" stroke-width="1.1" opacity="1"/>
<line x1="378.29999999999995" y1="345" x2="378.29999999999995" y2="372" stroke="#d23ff0" stroke-width="1" opacity="0.5"/>
<line x1="376.29999999999995" y1="372" x2="376.29999999999995" y2="396" stroke="#d23ff0" stroke-width="1.1" opacity="0.85"/>
<line x1="376.29999999999995" y1="395.5" x2="378.79999999999995" y2="395.5" stroke="#d23ff0" stroke-width="1" opacity="0.8"/>
<line x1="376.79999999999995" y1="372.5" x2="379.99999999999994" y2="372.5" stroke="#1ea2f0" stroke-width="1" opacity="0.85"/>
<rect x="380.99999999999994" y="273" width="1.5" height="19" fill="#7048c0" opacity="0.5"/>
<line x1="380.59999999999997" y1="272" x2="380.59999999999997" y2="292" stroke="#d23ff0" stroke-width="1.3" opacity="1"/>
<line x1="382.99999999999994" y1="272" x2="382.99999999999994" y2="292" stroke="#d23ff0" stroke-width="1.3" opacity="1"/>
<line x1="379.99999999999994" y1="272.6" x2="383.59999999999997" y2="272.6" stroke="#d23ff0" stroke-width="1.2" opacity="1"/>
<rect x="380.29999999999995" y="292" width="2.4" height="26" fill="#8070f4" opacity="1"/>
<line x1="383.29999999999995" y1="292" x2="383.29999999999995" y2="318" stroke="#c844f0" stroke-width="1.4" opacity="0.9"/>
<rect x="380.49999999999994" y="318" width="2" height="27" fill="#6a54d8" opacity="0.8"/>
<rect x="382.69999999999993" y="318" width="1.5" height="27" fill="#d040f0" opacity="0.9"/>
<rect x="380.99999999999994" y="345" width="1.6" height="27" fill="#4490f4" opacity="0.7"/>
<line x1="380.49999999999994" y1="345" x2="380.49999999999994" y2="372" stroke="#22a0f0" stroke-width="1.1" opacity="1"/>
<line x1="382.99999999999994" y1="345" x2="382.99999999999994" y2="372" stroke="#22a0f0" stroke-width="1.1" opacity="1"/>
<line x1="382.49999999999994" y1="372" x2="382.49999999999994" y2="396" stroke="#d23ff0" stroke-width="1.1" opacity="0.85"/>
<line x1="384.49999999999994" y1="372" x2="384.49999999999994" y2="396" stroke="#d23ff0" stroke-width="1.1" opacity="0.7"/>
<line x1="382.49999999999994" y1="395.5" x2="384.99999999999994" y2="395.5" stroke="#d23ff0" stroke-width="1" opacity="0.8"/>
<line x1="382.99999999999994" y1="372.5" x2="386.19999999999993" y2="372.5" stroke="#1ea2f0" stroke-width="1" opacity="0.85"/>
<rect x="387.19999999999993" y="273" width="2.0" height="19" fill="#7048c0" opacity="0.5"/>
<line x1="386.79999999999995" y1="272" x2="386.79999999999995" y2="292" stroke="#d23ff0" stroke-width="1.3" opacity="1"/>
<line x1="389.69999999999993" y1="272" x2="389.69999999999993" y2="292" stroke="#d23ff0" stroke-width="1.3" opacity="1"/>
<line x1="386.19999999999993" y1="272.6" x2="390.29999999999995" y2="272.6" stroke="#d23ff0" stroke-width="1.2" opacity="1"/>
<line x1="391.04999999999995" y1="272" x2="391.04999999999995" y2="292" stroke="#d23ff0" stroke-width="1" opacity="0.5"/>
<rect x="386.49999999999994" y="292" width="2.4" height="26" fill="#8070f4" opacity="1"/>
<line x1="389.99999999999994" y1="292" x2="389.99999999999994" y2="318" stroke="#c844f0" stroke-width="1.4" opacity="0.9"/>
<rect x="386.69999999999993" y="318" width="2" height="27" fill="#6a54d8" opacity="0.8"/>
<rect x="389.3999999999999" y="318" width="1.5" height="27" fill="#d040f0" opacity="0.9"/>
<rect x="387.19999999999993" y="345" width="1.6" height="27" fill="#4490f4" opacity="0.7"/>
<line x1="386.69999999999993" y1="345" x2="386.69999999999993" y2="372" stroke="#22a0f0" stroke-width="1.1" opacity="1"/>
<line x1="389.69999999999993" y1="345" x2="389.69999999999993" y2="372" stroke="#22a0f0" stroke-width="1.1" opacity="1"/>
<line x1="389.19999999999993" y1="372" x2="389.19999999999993" y2="396" stroke="#d23ff0" stroke-width="1.1" opacity="0.85"/>
<line x1="389.19999999999993" y1="395.5" x2="391.69999999999993" y2="395.5" stroke="#d23ff0" stroke-width="1" opacity="0.8"/>
<line x1="389.69999999999993" y1="372.5" x2="392.3999999999999" y2="372.5" stroke="#1ea2f0" stroke-width="1" opacity="0.85"/>
<rect x="393.3999999999999" y="273" width="1.5" height="19" fill="#7048c0" opacity="0.5"/>
<line x1="392.99999999999994" y1="272" x2="392.99999999999994" y2="292" stroke="#d23ff0" stroke-width="1.3" opacity="1"/>
<line x1="395.3999999999999" y1="272" x2="395.3999999999999" y2="292" stroke="#d23ff0" stroke-width="1.3" opacity="1"/>
<line x1="392.3999999999999" y1="272.6" x2="395.99999999999994" y2="272.6" stroke="#d23ff0" stroke-width="1.2" opacity="1"/>
<rect x="392.69999999999993" y="292" width="2.4" height="26" fill="#8070f4" opacity="1"/>
<line x1="395.69999999999993" y1="292" x2="395.69999999999993" y2="318" stroke="#c844f0" stroke-width="1.4" opacity="0.9"/>
<rect x="392.8999999999999" y="318" width="2" height="27" fill="#6a54d8" opacity="0.8"/>
<rect x="395.0999999999999" y="318" width="1.5" height="27" fill="#d040f0" opacity="0.9"/>
<rect x="393.3999999999999" y="345" width="1.6" height="27" fill="#4490f4" opacity="0.7"/>
<line x1="392.8999999999999" y1="345" x2="392.8999999999999" y2="372" stroke="#22a0f0" stroke-width="1.1" opacity="1"/>
<line x1="395.3999999999999" y1="345" x2="395.3999999999999" y2="372" stroke="#22a0f0" stroke-width="1.1" opacity="1"/>
<line x1="394.8999999999999" y1="372" x2="394.8999999999999" y2="396" stroke="#d23ff0" stroke-width="1.1" opacity="0.85"/>
<line x1="394.8999999999999" y1="395.5" x2="397.3999999999999" y2="395.5" stroke="#d23ff0" stroke-width="1" opacity="0.8"/>
<line x1="395.3999999999999" y1="372.5" x2="398.5999999999999" y2="372.5" stroke="#1ea2f0" stroke-width="1" opacity="0.85"/>
<rect x="396" y="272" width="5.0" height="100" fill="#6a5ad8" opacity="0.11616819219047737"/>
<line x1="396.5" y1="226" x2="396.5" y2="372" stroke="#1ea2f0" stroke-width="1" opacity="0.95"/>
<line x1="398.5" y1="226" x2="398.5" y2="372" stroke="#1ea2f0" stroke-width="1" opacity="0.95"/>
<line x1="396" y1="226.5" x2="399" y2="226.5" stroke="#1ea2f0" stroke-width="1" opacity="0.95"/>
<line x1="399.5" y1="272" x2="399.5" y2="420" stroke="#d23ff0" stroke-width="1" opacity="0.9"/>
<line x1="400.5" y1="272" x2="400.5" y2="420" stroke="#d23ff0" stroke-width="1" opacity="0.9"/>
<line x1="399" y1="419.5" x2="401.0" y2="419.5" stroke="#d23ff0" stroke-width="1" opacity="0.9"/>
<rect x="401.0" y="272" width="5.0" height="100" fill="#6a5ad8" opacity="0.14868087545596267"/>
<line x1="401.5" y1="226" x2="401.5" y2="372" stroke="#1ea2f0" stroke-width="1" opacity="0.95"/>
<line x1="403.5" y1="226" x2="403.5" y2="372" stroke="#1ea2f0" stroke-width="1" opacity="0.95"/>
<line x1="401.0" y1="226.5" x2="404.0" y2="226.5" stroke="#1ea2f0" stroke-width="1" opacity="0.95"/>
<line x1="404.5" y1="272" x2="404.5" y2="420" stroke="#d23ff0" stroke-width="1" opacity="0.9"/>
<line x1="405.5" y1="272" x2="405.5" y2="420" stroke="#d23ff0" stroke-width="1" opacity="0.9"/>
<line x1="404.0" y1="419.5" x2="406.0" y2="419.5" stroke="#d23ff0" stroke-width="1" opacity="0.9"/>
<rect x="406.0" y="272" width="5.0" height="100" fill="#6a5ad8" opacity="0.1017191720483781"/>
<rect x="406.5" y="344.05343246236635" width="2" height="25" fill="#3a90f0" opacity="0.6"/>
<line x1="406.5" y1="226" x2="406.5" y2="372" stroke="#1ea2f0" stroke-width="1" opacity="0.95"/>
<line x1="408.5" y1="226" x2="408.5" y2="372" stroke="#1ea2f0" stroke-width="1" opacity="0.95"/>
<line x1="406.0" y1="226.5" x2="409.0" y2="226.5" stroke="#1ea2f0" stroke-width="1" opacity="0.95"/>
<line x1="409.5" y1="272" x2="409.5" y2="420" stroke="#d23ff0" stroke-width="1" opacity="0.9"/>
<line x1="410.5" y1="272" x2="410.5" y2="420" stroke="#d23ff0" stroke-width="1" opacity="0.9"/>
<line x1="409.0" y1="419.5" x2="411.0" y2="419.5" stroke="#d23ff0" stroke-width="1" opacity="0.9"/>
<rect x="411.0" y="272" width="5.0" height="100" fill="#6a5ad8" opacity="0.1013667007937214"/>
<line x1="411.5" y1="226" x2="411.5" y2="372" stroke="#1ea2f0" stroke-width="1" opacity="0.95"/>
<line x1="414.0" y1="226" x2="414.0" y2="372" stroke="#1ea2f0" stroke-width="1" opacity="0.95"/>
<line x1="411.0" y1="226.5" x2="414.5" y2="226.5" stroke="#1ea2f0" stroke-width="1" opacity="0.95"/>
<line x1="415.0" y1="272" x2="415.0" y2="420" stroke="#d23ff0" stroke-width="1" opacity="0.9"/>
<line x1="415.5" y1="272" x2="415.5" y2="420" stroke="#d23ff0" stroke-width="1" opacity="0.9"/>
<line x1="414.5" y1="419.5" x2="416.0" y2="419.5" stroke="#d23ff0" stroke-width="1" opacity="0.9"/>
<line x1="416.5" y1="226.5" x2="428.5" y2="226.5" stroke="#1ea2f0" stroke-width="1.2" opacity="1"/>
<line x1="416.5" y1="226" x2="416.5" y2="272" stroke="#1ea2f0" stroke-width="1.2" opacity="1"/>
<line x1="428.5" y1="226" x2="428.5" y2="272" stroke="#1ea2f0" stroke-width="1.2" opacity="1"/>
<line x1="416.5" y1="260" x2="416.5" y2="420" stroke="#d23ff0" stroke-width="1.2" opacity="1"/>
<line x1="428.5" y1="260" x2="428.5" y2="420" stroke="#d23ff0" stroke-width="1.2" opacity="1"/>
<rect x="431" y="273" width="1.5" height="19" fill="#7048c0" opacity="0.5"/>
<line x1="430.6" y1="272" x2="430.6" y2="292" stroke="#d23ff0" stroke-width="1.3" opacity="1"/>
<line x1="433" y1="272" x2="433" y2="292" stroke="#d23ff0" stroke-width="1.3" opacity="1"/>
<line x1="430" y1="272.6" x2="433.6" y2="272.6" stroke="#d23ff0" stroke-width="1.2" opacity="1"/>
<rect x="430.3" y="292" width="2.4" height="18" fill="#8070f4" opacity="1"/>
<line x1="433.3" y1="292" x2="433.3" y2="310" stroke="#c844f0" stroke-width="1.4" opacity="0.9"/>
<rect x="430.5" y="310" width="2" height="35" fill="#6a54d8" opacity="0.8"/>
<rect x="432.7" y="310" width="1.5" height="35" fill="#d040f0" opacity="0.9"/>
<rect x="431" y="345" width="1.6" height="27" fill="#4490f4" opacity="0.7"/>
<line x1="430.5" y1="345" x2="430.5" y2="372" stroke="#22a0f0" stroke-width="1.1" opacity="1"/>
<line x1="433" y1="345" x2="433" y2="372" stroke="#22a0f0" stroke-width="1.1" opacity="1"/>
<line x1="432.5" y1="372" x2="432.5" y2="420" stroke="#d23ff0" stroke-width="1.1" opacity="0.85"/>
<line x1="434.5" y1="372" x2="434.5" y2="420" stroke="#d23ff0" stroke-width="1.1" opacity="0.7"/>
<line x1="432.5" y1="419.5" x2="435" y2="419.5" stroke="#d23ff0" stroke-width="1" opacity="0.8"/>
<line x1="433" y1="372.5" x2="436.2" y2="372.5" stroke="#1ea2f0" stroke-width="1" opacity="0.85"/>
<line x1="433.5" y1="248" x2="433.5" y2="292" stroke="#1ea2f0" stroke-width="1.1" opacity="1"/>
<rect x="437.2" y="273" width="1.0" height="19" fill="#7048c0" opacity="0.5"/>
<line x1="436.8" y1="272" x2="436.8" y2="292" stroke="#d23ff0" stroke-width="1.3" opacity="1"/>
<line x1="438.7" y1="272" x2="438.7" y2="292" stroke="#d23ff0" stroke-width="1.3" opacity="1"/>
<line x1="436.2" y1="272.6" x2="439.3" y2="272.6" stroke="#d23ff0" stroke-width="1.2" opacity="1"/>
<rect x="436.5" y="292" width="2.4" height="18" fill="#8070f4" opacity="1"/>
<line x1="439.0" y1="292" x2="439.0" y2="310" stroke="#c844f0" stroke-width="1.4" opacity="0.9"/>
<rect x="436.7" y="310" width="2" height="35" fill="#6a54d8" opacity="0.8"/>
<rect x="438.4" y="310" width="1.5" height="35" fill="#d040f0" opacity="0.9"/>
<rect x="437.2" y="345" width="1.6" height="27" fill="#4490f4" opacity="0.7"/>
<line x1="436.7" y1="345" x2="436.7" y2="372" stroke="#22a0f0" stroke-width="1.1" opacity="1"/>
<line x1="438.7" y1="345" x2="438.7" y2="372" stroke="#22a0f0" stroke-width="1.1" opacity="1"/>
<line x1="438.2" y1="372" x2="438.2" y2="420" stroke="#d23ff0" stroke-width="1.1" opacity="0.85"/>
<line x1="438.2" y1="419.5" x2="440.7" y2="419.5" stroke="#d23ff0" stroke-width="1" opacity="0.8"/>
<line x1="438.7" y1="372.5" x2="442.4" y2="372.5" stroke="#1ea2f0" stroke-width="1" opacity="0.85"/>
<line x1="439.2" y1="248" x2="439.2" y2="292" stroke="#1ea2f0" stroke-width="1.1" opacity="1"/>
<rect x="443.4" y="273" width="1.5" height="19" fill="#7048c0" opacity="0.5"/>
<line x1="443.0" y1="272" x2="443.0" y2="292" stroke="#d23ff0" stroke-width="1.3" opacity="1"/>
<line x1="445.4" y1="272" x2="445.4" y2="292" stroke="#d23ff0" stroke-width="1.3" opacity="1"/>
<line x1="442.4" y1="272.6" x2="446.0" y2="272.6" stroke="#d23ff0" stroke-width="1.2" opacity="1"/>
<rect x="442.7" y="292" width="2.4" height="18" fill="#8070f4" opacity="1"/>
<line x1="445.7" y1="292" x2="445.7" y2="310" stroke="#c844f0" stroke-width="1.4" opacity="0.9"/>
<rect x="442.9" y="310" width="2" height="35" fill="#6a54d8" opacity="0.8"/>
<rect x="445.09999999999997" y="310" width="1.5" height="35" fill="#d040f0" opacity="0.9"/>
<rect x="443.4" y="345" width="1.6" height="27" fill="#4490f4" opacity="0.7"/>
<line x1="442.9" y1="345" x2="442.9" y2="372" stroke="#22a0f0" stroke-width="1.1" opacity="1"/>
<line x1="445.4" y1="345" x2="445.4" y2="372" stroke="#22a0f0" stroke-width="1.1" opacity="1"/>
<line x1="444.9" y1="372" x2="444.9" y2="420" stroke="#d23ff0" stroke-width="1.1" opacity="0.85"/>
<line x1="444.9" y1="419.5" x2="447.4" y2="419.5" stroke="#d23ff0" stroke-width="1" opacity="0.8"/>
<line x1="445.4" y1="372.5" x2="448.59999999999997" y2="372.5" stroke="#1ea2f0" stroke-width="1" opacity="0.85"/>
<line x1="445.9" y1="248" x2="445.9" y2="292" stroke="#1ea2f0" stroke-width="1.1" opacity="1"/>
<rect x="449.59999999999997" y="273" width="-0.0999999999999659" height="19" fill="#7048c0" opacity="0.5"/>
<line x1="449.2" y1="272" x2="449.2" y2="292" stroke="#d23ff0" stroke-width="1.3" opacity="1"/>
<line x1="450.0" y1="272" x2="450.0" y2="292" stroke="#d23ff0" stroke-width="1.3" opacity="1"/>
<line x1="448.59999999999997" y1="272.6" x2="450.6" y2="272.6" stroke="#d23ff0" stroke-width="1.2" opacity="1"/>
<line x1="452.4" y1="272" x2="452.4" y2="292" stroke="#d23ff0" stroke-width="1" opacity="0.5"/>
<rect x="448.9" y="292" width="2.4" height="18" fill="#8070f4" opacity="1"/>
<line x1="450.3" y1="292" x2="450.3" y2="310" stroke="#c844f0" stroke-width="1.4" opacity="0.9"/>
<rect x="449.09999999999997" y="310" width="2" height="35" fill="#6a54d8" opacity="0.8"/>
<rect x="449.7" y="310" width="1.5" height="35" fill="#d040f0" opacity="0.9"/>
<rect x="449.59999999999997" y="345" width="1.6" height="27" fill="#4490f4" opacity="0.7"/>
<line x1="449.09999999999997" y1="345" x2="449.09999999999997" y2="372" stroke="#22a0f0" stroke-width="1.1" opacity="1"/>
<line x1="450.0" y1="345" x2="450.0" y2="372" stroke="#22a0f0" stroke-width="1.1" opacity="1"/>
<line x1="449.5" y1="372" x2="449.5" y2="420" stroke="#d23ff0" stroke-width="1.1" opacity="0.85"/>
<line x1="449.5" y1="419.5" x2="452.0" y2="419.5" stroke="#d23ff0" stroke-width="1" opacity="0.8"/>
<line x1="450.0" y1="372.5" x2="454.79999999999995" y2="372.5" stroke="#1ea2f0" stroke-width="1" opacity="0.85"/>
<line x1="450.5" y1="248" x2="450.5" y2="292" stroke="#1ea2f0" stroke-width="1.1" opacity="1"/>
<rect x="450" y="272" width="5.6" height="100" fill="#6a5ad8" opacity="0.29085814436126795"/>
<line x1="450.5" y1="226" x2="450.5" y2="372" stroke="#1ea2f0" stroke-width="1" opacity="0.95"/>
<line x1="452.0" y1="226" x2="452.0" y2="372" stroke="#1ea2f0" stroke-width="1" opacity="0.95"/>
<line x1="450" y1="226.5" x2="452.5" y2="226.5" stroke="#1ea2f0" stroke-width="1" opacity="0.95"/>
<line x1="453.0" y1="272" x2="453.0" y2="420" stroke="#d23ff0" stroke-width="1" opacity="0.9"/>
<line x1="455.1" y1="272" x2="455.1" y2="420" stroke="#d23ff0" stroke-width="1" opacity="0.9"/>
<line x1="452.5" y1="419.5" x2="455.6" y2="419.5" stroke="#d23ff0" stroke-width="1" opacity="0.9"/>
<rect x="455.6" y="272" width="5.6" height="100" fill="#6a5ad8" opacity="0.22880074078085816"/>
<rect x="458.6" y="301.3623745657879" width="1.5" height="39.75350054720227" fill="#d040f0" opacity="0.6"/>
<rect x="456.1" y="340.15766871923046" width="2" height="25" fill="#3a90f0" opacity="0.6"/>
<line x1="456.1" y1="226" x2="456.1" y2="372" stroke="#1ea2f0" stroke-width="1" opacity="0.95"/>
<line x1="458.1" y1="226" x2="458.1" y2="372" stroke="#1ea2f0" stroke-width="1" opacity="0.95"/>
<line x1="455.6" y1="226.5" x2="458.6" y2="226.5" stroke="#1ea2f0" stroke-width="1" opacity="0.95"/>
<line x1="459.1" y1="272" x2="459.1" y2="420" stroke="#d23ff0" stroke-width="1" opacity="0.9"/>
<line x1="460.70000000000005" y1="272" x2="460.70000000000005" y2="420" stroke="#d23ff0" stroke-width="1" opacity="0.9"/>
<line x1="458.6" y1="419.5" x2="461.20000000000005" y2="419.5" stroke="#d23ff0" stroke-width="1" opacity="0.9"/>
<rect x="461.20000000000005" y="272" width="5.6" height="100" fill="#6a5ad8" opacity="0.2508857320245577"/>
<rect x="461.70000000000005" y="338.29186109442537" width="2" height="25" fill="#3a90f0" opacity="0.6"/>
<line x1="461.70000000000005" y1="226" x2="461.70000000000005" y2="372" stroke="#1ea2f0" stroke-width="1" opacity="0.95"/>
<line x1="464.20000000000005" y1="226" x2="464.20000000000005" y2="372" stroke="#1ea2f0" stroke-width="1" opacity="0.95"/>
<line x1="461.20000000000005" y1="226.5" x2="464.70000000000005" y2="226.5" stroke="#1ea2f0" stroke-width="1" opacity="0.95"/>
<line x1="465.20000000000005" y1="272" x2="465.20000000000005" y2="420" stroke="#d23ff0" stroke-width="1" opacity="0.9"/>
<line x1="466.30000000000007" y1="272" x2="466.30000000000007" y2="420" stroke="#d23ff0" stroke-width="1" opacity="0.9"/>
<line x1="464.70000000000005" y1="419.5" x2="466.80000000000007" y2="419.5" stroke="#d23ff0" stroke-width="1" opacity="0.9"/>
<rect x="466.80000000000007" y="272" width="5.6" height="100" fill="#6a5ad8" opacity="0.24444588233093276"/>
<rect x="469.80000000000007" y="304.17125136635553" width="1.5" height="38.94991767025039" fill="#d040f0" opacity="0.6"/>
<rect x="467.30000000000007" y="341.48667327572167" width="2" height="25" fill="#3a90f0" opacity="0.6"/>
<line x1="467.30000000000007" y1="226" x2="467.30000000000007" y2="372" stroke="#1ea2f0" stroke-width="1" opacity="0.95"/>
<line x1="469.30000000000007" y1="226" x2="469.30000000000007" y2="372" stroke="#1ea2f0" stroke-width="1" opacity="0.95"/>
<line x1="466.80000000000007" y1="226.5" x2="469.80000000000007" y2="226.5" stroke="#1ea2f0" stroke-width="1" opacity="0.95"/>
<line x1="470.30000000000007" y1="272" x2="470.30000000000007" y2="420" stroke="#d23ff0" stroke-width="1" opacity="0.9"/>
<line x1="471.9000000000001" y1="272" x2="471.9000000000001" y2="420" stroke="#d23ff0" stroke-width="1" opacity="0.9"/>
<line x1="469.80000000000007" y1="419.5" x2="472.4000000000001" y2="419.5" stroke="#d23ff0" stroke-width="1" opacity="0.9"/>
<rect x="472.4000000000001" y="272" width="5.6" height="100" fill="#6a5ad8" opacity="0.20969068454138154"/>
<rect x="472.9000000000001" y="343.62933774085434" width="2" height="25" fill="#3a90f0" opacity="0.6"/>
<line x1="472.9000000000001" y1="226" x2="472.9000000000001" y2="372" stroke="#1ea2f0" stroke-width="1" opacity="0.95"/>
<line x1="474.9000000000001" y1="226" x2="474.9000000000001" y2="372" stroke="#1ea2f0" stroke-width="1" opacity="0.95"/>
<line x1="472.4000000000001" y1="226.5" x2="475.4000000000001" y2="226.5" stroke="#1ea2f0" stroke-width="1" opacity="0.95"/>
<line x1="475.9000000000001" y1="272" x2="475.9000000000001" y2="420" stroke="#d23ff0" stroke-width="1" opacity="0.9"/>
<line x1="477.5000000000001" y1="272" x2="477.5000000000001" y2="420" stroke="#d23ff0" stroke-width="1" opacity="0.9"/>
<line x1="475.4000000000001" y1="419.5" x2="478.0000000000001" y2="419.5" stroke="#d23ff0" stroke-width="1" opacity="0.9"/>
<rect x="479" y="273" width="2.0" height="19" fill="#7048c0" opacity="0.5"/>
<line x1="478.6" y1="272" x2="478.6" y2="292" stroke="#d23ff0" stroke-width="1.3" opacity="1"/>
<line x1="481.5" y1="272" x2="481.5" y2="292" stroke="#d23ff0" stroke-width="1.3" opacity="1"/>
<line x1="478" y1="272.6" x2="482.1" y2="272.6" stroke="#d23ff0" stroke-width="1.2" opacity="1"/>
<line x1="482.85" y1="272" x2="482.85" y2="292" stroke="#d23ff0" stroke-width="1" opacity="0.5"/>
<rect x="478.3" y="292" width="2.4" height="18" fill="#8070f4" opacity="1"/>
<line x1="481.8" y1="292" x2="481.8" y2="310" stroke="#c844f0" stroke-width="1.4" opacity="0.9"/>
<rect x="478.5" y="310" width="2" height="35" fill="#6a54d8" opacity="0.8"/>
<rect x="481.2" y="310" width="1.5" height="35" fill="#d040f0" opacity="0.9"/>
<rect x="479" y="345" width="1.6" height="27" fill="#4490f4" opacity="0.7"/>
<line x1="478.5" y1="345" x2="478.5" y2="372" stroke="#22a0f0" stroke-width="1.1" opacity="1"/>
<line x1="481.5" y1="345" x2="481.5" y2="372" stroke="#22a0f0" stroke-width="1.1" opacity="1"/>
<line x1="481.0" y1="372" x2="481.0" y2="420" stroke="#d23ff0" stroke-width="1.1" opacity="0.85"/>
<line x1="481.0" y1="419.5" x2="483.5" y2="419.5" stroke="#d23ff0" stroke-width="1" opacity="0.8"/>
<line x1="481.5" y1="372.5" x2="484.2" y2="372.5" stroke="#1ea2f0" stroke-width="1" opacity="0.85"/>
<line x1="482.0" y1="248" x2="482.0" y2="292" stroke="#1ea2f0" stroke-width="1.1" opacity="1"/>
<rect x="485.2" y="273" width="2.0" height="19" fill="#7048c0" opacity="0.5"/>
<line x1="484.8" y1="272" x2="484.8" y2="292" stroke="#d23ff0" stroke-width="1.3" opacity="1"/>
<line x1="487.7" y1="272" x2="487.7" y2="292" stroke="#d23ff0" stroke-width="1.3" opacity="1"/>
<line x1="484.2" y1="272.6" x2="488.3" y2="272.6" stroke="#d23ff0" stroke-width="1.2" opacity="1"/>
<line x1="489.05" y1="272" x2="489.05" y2="292" stroke="#d23ff0" stroke-width="1" opacity="0.5"/>
<rect x="484.5" y="292" width="2.4" height="18" fill="#8070f4" opacity="1"/>
<line x1="488.0" y1="292" x2="488.0" y2="310" stroke="#c844f0" stroke-width="1.4" opacity="0.9"/>
<rect x="484.7" y="310" width="2" height="35" fill="#6a54d8" opacity="0.8"/>
<rect x="487.4" y="310" width="1.5" height="35" fill="#d040f0" opacity="0.9"/>
<rect x="485.2" y="345" width="1.6" height="27" fill="#4490f4" opacity="0.7"/>
<line x1="484.7" y1="345" x2="484.7" y2="372" stroke="#22a0f0" stroke-width="1.1" opacity="1"/>
<line x1="487.7" y1="345" x2="487.7" y2="372" stroke="#22a0f0" stroke-width="1.1" opacity="1"/>
<line x1="487.2" y1="372" x2="487.2" y2="420" stroke="#d23ff0" stroke-width="1.1" opacity="0.85"/>
<line x1="487.2" y1="419.5" x2="489.7" y2="419.5" stroke="#d23ff0" stroke-width="1" opacity="0.8"/>
<line x1="487.7" y1="372.5" x2="490.4" y2="372.5" stroke="#1ea2f0" stroke-width="1" opacity="0.85"/>
<line x1="488.2" y1="248" x2="488.2" y2="292" stroke="#1ea2f0" stroke-width="1.1" opacity="1"/>
<rect x="491.4" y="273" width="1.5" height="19" fill="#7048c0" opacity="0.5"/>
<line x1="491.0" y1="272" x2="491.0" y2="292" stroke="#d23ff0" stroke-width="1.3" opacity="1"/>
<line x1="493.4" y1="272" x2="493.4" y2="292" stroke="#d23ff0" stroke-width="1.3" opacity="1"/>
<line x1="490.4" y1="272.6" x2="494.0" y2="272.6" stroke="#d23ff0" stroke-width="1.2" opacity="1"/>
<line x1="495.0" y1="272" x2="495.0" y2="292" stroke="#d23ff0" stroke-width="1" opacity="0.5"/>
<rect x="490.7" y="292" width="2.4" height="18" fill="#8070f4" opacity="1"/>
<line x1="493.7" y1="292" x2="493.7" y2="310" stroke="#c844f0" stroke-width="1.4" opacity="0.9"/>
<rect x="490.9" y="310" width="2" height="35" fill="#6a54d8" opacity="0.8"/>
<rect x="493.09999999999997" y="310" width="1.5" height="35" fill="#d040f0" opacity="0.9"/>
<rect x="491.4" y="345" width="1.6" height="27" fill="#4490f4" opacity="0.7"/>
<line x1="490.9" y1="345" x2="490.9" y2="372" stroke="#22a0f0" stroke-width="1.1" opacity="1"/>
<line x1="493.4" y1="345" x2="493.4" y2="372" stroke="#22a0f0" stroke-width="1.1" opacity="1"/>
<line x1="492.9" y1="372" x2="492.9" y2="420" stroke="#d23ff0" stroke-width="1.1" opacity="0.85"/>
<line x1="494.9" y1="372" x2="494.9" y2="420" stroke="#d23ff0" stroke-width="1.1" opacity="0.7"/>
<line x1="492.9" y1="419.5" x2="495.4" y2="419.5" stroke="#d23ff0" stroke-width="1" opacity="0.8"/>
<line x1="493.4" y1="372.5" x2="496.59999999999997" y2="372.5" stroke="#1ea2f0" stroke-width="1" opacity="0.85"/>
<line x1="493.9" y1="248" x2="493.9" y2="292" stroke="#1ea2f0" stroke-width="1.1" opacity="1"/>
<rect x="497.59999999999997" y="273" width="2.0" height="19" fill="#7048c0" opacity="0.5"/>
<line x1="497.2" y1="272" x2="497.2" y2="292" stroke="#d23ff0" stroke-width="1.3" opacity="1"/>
<line x1="500.09999999999997" y1="272" x2="500.09999999999997" y2="292" stroke="#d23ff0" stroke-width="1.3" opacity="1"/>
<line x1="496.59999999999997" y1="272.6" x2="500.7" y2="272.6" stroke="#d23ff0" stroke-width="1.2" opacity="1"/>
<line x1="501.45" y1="272" x2="501.45" y2="292" stroke="#d23ff0" stroke-width="1" opacity="0.5"/>
<rect x="496.9" y="292" width="2.4" height="18" fill="#8070f4" opacity="1"/>
<line x1="500.4" y1="292" x2="500.4" y2="310" stroke="#c844f0" stroke-width="1.4" opacity="0.9"/>
<rect x="497.09999999999997" y="310" width="2" height="35" fill="#6a54d8" opacity="0.8"/>
<rect x="499.79999999999995" y="310" width="1.5" height="35" fill="#d040f0" opacity="0.9"/>
<rect x="497.59999999999997" y="345" width="1.6" height="27" fill="#4490f4" opacity="0.7"/>
<line x1="497.09999999999997" y1="345" x2="497.09999999999997" y2="372" stroke="#22a0f0" stroke-width="1.1" opacity="1"/>
<line x1="500.09999999999997" y1="345" x2="500.09999999999997" y2="372" stroke="#22a0f0" stroke-width="1.1" opacity="1"/>
<line x1="499.59999999999997" y1="372" x2="499.59999999999997" y2="420" stroke="#d23ff0" stroke-width="1.1" opacity="0.85"/>
<line x1="501.59999999999997" y1="372" x2="501.59999999999997" y2="420" stroke="#d23ff0" stroke-width="1.1" opacity="0.7"/>
<line x1="499.59999999999997" y1="419.5" x2="502.09999999999997" y2="419.5" stroke="#d23ff0" stroke-width="1" opacity="0.8"/>
<line x1="500.09999999999997" y1="372.5" x2="502.79999999999995" y2="372.5" stroke="#1ea2f0" stroke-width="1" opacity="0.85"/>
<line x1="500.59999999999997" y1="248" x2="500.59999999999997" y2="292" stroke="#1ea2f0" stroke-width="1.1" opacity="1"/>
<rect x="503.79999999999995" y="273" width="1.5" height="19" fill="#7048c0" opacity="0.5"/>
<line x1="503.4" y1="272" x2="503.4" y2="292" stroke="#d23ff0" stroke-width="1.3" opacity="1"/>
<line x1="505.79999999999995" y1="272" x2="505.79999999999995" y2="292" stroke="#d23ff0" stroke-width="1.3" opacity="1"/>
<line x1="502.79999999999995" y1="272.6" x2="506.4" y2="272.6" stroke="#d23ff0" stroke-width="1.2" opacity="1"/>
<line x1="507.4" y1="272" x2="507.4" y2="292" stroke="#d23ff0" stroke-width="1" opacity="0.5"/>
<rect x="503.09999999999997" y="292" width="2.4" height="18" fill="#8070f4" opacity="1"/>
<line x1="506.09999999999997" y1="292" x2="506.09999999999997" y2="310" stroke="#c844f0" stroke-width="1.4" opacity="0.9"/>
<rect x="503.29999999999995" y="310" width="2" height="35" fill="#6a54d8" opacity="0.8"/>
<rect x="505.49999999999994" y="310" width="1.5" height="35" fill="#d040f0" opacity="0.9"/>
<rect x="503.79999999999995" y="345" width="1.6" height="27" fill="#4490f4" opacity="0.7"/>
<line x1="503.29999999999995" y1="345" x2="503.29999999999995" y2="372" stroke="#22a0f0" stroke-width="1.1" opacity="1"/>
<line x1="505.79999999999995" y1="345" x2="505.79999999999995" y2="372" stroke="#22a0f0" stroke-width="1.1" opacity="1"/>
<line x1="505.29999999999995" y1="372" x2="505.29999999999995" y2="420" stroke="#d23ff0" stroke-width="1.1" opacity="0.85"/>
<line x1="507.29999999999995" y1="372" x2="507.29999999999995" y2="420" stroke="#d23ff0" stroke-width="1.1" opacity="0.7"/>
<line x1="505.29999999999995" y1="419.5" x2="507.79999999999995" y2="419.5" stroke="#d23ff0" stroke-width="1" opacity="0.8"/>
<line x1="505.79999999999995" y1="372.5" x2="508.99999999999994" y2="372.5" stroke="#1ea2f0" stroke-width="1" opacity="0.85"/>
<line x1="506.29999999999995" y1="248" x2="506.29999999999995" y2="292" stroke="#1ea2f0" stroke-width="1.1" opacity="1"/>
<rect x="509.99999999999994" y="273" width="1.5" height="19" fill="#7048c0" opacity="0.5"/>
<line x1="509.59999999999997" y1="272" x2="509.59999999999997" y2="292" stroke="#d23ff0" stroke-width="1.3" opacity="1"/>
<line x1="511.99999999999994" y1="272" x2="511.99999999999994" y2="292" stroke="#d23ff0" stroke-width="1.3" opacity="1"/>
<line x1="508.99999999999994" y1="272.6" x2="512.5999999999999" y2="272.6" stroke="#d23ff0" stroke-width="1.2" opacity="1"/>
<line x1="513.5999999999999" y1="272" x2="513.5999999999999" y2="292" stroke="#d23ff0" stroke-width="1" opacity="0.5"/>
<rect x="509.29999999999995" y="292" width="2.4" height="18" fill="#8070f4" opacity="1"/>
<line x1="512.3" y1="292" x2="512.3" y2="310" stroke="#c844f0" stroke-width="1.4" opacity="0.9"/>
<rect x="509.49999999999994" y="310" width="2" height="35" fill="#6a54d8" opacity="0.8"/>
<rect x="511.69999999999993" y="310" width="1.5" height="35" fill="#d040f0" opacity="0.9"/>
<rect x="509.99999999999994" y="345" width="1.6" height="27" fill="#4490f4" opacity="0.7"/>
<line x1="509.49999999999994" y1="345" x2="509.49999999999994" y2="372" stroke="#22a0f0" stroke-width="1.1" opacity="1"/>
<line x1="511.99999999999994" y1="345" x2="511.99999999999994" y2="372" stroke="#22a0f0" stroke-width="1.1" opacity="1"/>
<line x1="511.49999999999994" y1="372" x2="511.49999999999994" y2="420" stroke="#d23ff0" stroke-width="1.1" opacity="0.85"/>
<line x1="513.5" y1="372" x2="513.5" y2="420" stroke="#d23ff0" stroke-width="1.1" opacity="0.7"/>
<line x1="511.49999999999994" y1="419.5" x2="514.0" y2="419.5" stroke="#d23ff0" stroke-width="1" opacity="0.8"/>
<line x1="511.99999999999994" y1="372.5" x2="515.1999999999999" y2="372.5" stroke="#1ea2f0" stroke-width="1" opacity="0.85"/>
<line x1="512.5" y1="248" x2="512.5" y2="292" stroke="#1ea2f0" stroke-width="1.1" opacity="1"/>
<rect x="516.1999999999999" y="273" width="1.5" height="19" fill="#7048c0" opacity="0.5"/>
<line x1="515.8" y1="272" x2="515.8" y2="292" stroke="#d23ff0" stroke-width="1.3" opacity="1"/>
<line x1="518.1999999999999" y1="272" x2="518.1999999999999" y2="292" stroke="#d23ff0" stroke-width="1.3" opacity="1"/>
<line x1="515.1999999999999" y1="272.6" x2="518.8" y2="272.6" stroke="#d23ff0" stroke-width="1.2" opacity="1"/>
<rect x="515.4999999999999" y="292" width="2.4" height="18" fill="#8070f4" opacity="1"/>
<line x1="518.4999999999999" y1="292" x2="518.4999999999999" y2="310" stroke="#c844f0" stroke-width="1.4" opacity="0.9"/>
<rect x="515.6999999999999" y="310" width="2" height="35" fill="#6a54d8" opacity="0.8"/>
<rect x="517.9" y="310" width="1.5" height="35" fill="#d040f0" opacity="0.9"/>
<rect x="516.1999999999999" y="345" width="1.6" height="27" fill="#4490f4" opacity="0.7"/>
<line x1="515.6999999999999" y1="345" x2="515.6999999999999" y2="372" stroke="#22a0f0" stroke-width="1.1" opacity="1"/>
<line x1="518.1999999999999" y1="345" x2="518.1999999999999" y2="372" stroke="#22a0f0" stroke-width="1.1" opacity="1"/>
<line x1="519.6999999999999" y1="345" x2="519.6999999999999" y2="372" stroke="#d23ff0" stroke-width="1" opacity="0.5"/>
<line x1="517.6999999999999" y1="372" x2="517.6999999999999" y2="420" stroke="#d23ff0" stroke-width="1.1" opacity="0.85"/>
<line x1="517.6999999999999" y1="419.5" x2="520.1999999999999" y2="419.5" stroke="#d23ff0" stroke-width="1" opacity="0.8"/>
<line x1="518.1999999999999" y1="372.5" x2="521.4" y2="372.5" stroke="#1ea2f0" stroke-width="1" opacity="0.85"/>
<line x1="518.6999999999999" y1="248" x2="518.6999999999999" y2="292" stroke="#1ea2f0" stroke-width="1.1" opacity="1"/>
<rect x="522.4" y="273" width="1.5" height="19" fill="#7048c0" opacity="0.5"/>
<line x1="522.0" y1="272" x2="522.0" y2="292" stroke="#d23ff0" stroke-width="1.3" opacity="1"/>
<line x1="524.4" y1="272" x2="524.4" y2="292" stroke="#d23ff0" stroke-width="1.3" opacity="1"/>
<line x1="521.4" y1="272.6" x2="525.0" y2="272.6" stroke="#d23ff0" stroke-width="1.2" opacity="1"/>
<line x1="526.0" y1="272" x2="526.0" y2="292" stroke="#d23ff0" stroke-width="1" opacity="0.5"/>
<rect x="521.6999999999999" y="292" width="2.4" height="18" fill="#8070f4" opacity="1"/>
<line x1="524.6999999999999" y1="292" x2="524.6999999999999" y2="310" stroke="#c844f0" stroke-width="1.4" opacity="0.9"/>
<rect x="521.9" y="310" width="2" height="35" fill="#6a54d8" opacity="0.8"/>
<rect x="524.1" y="310" width="1.5" height="35" fill="#d040f0" opacity="0.9"/>
<rect x="522.4" y="345" width="1.6" height="27" fill="#4490f4" opacity="0.7"/>
<line x1="521.9" y1="345" x2="521.9" y2="372" stroke="#22a0f0" stroke-width="1.1" opacity="1"/>
<line x1="524.4" y1="345" x2="524.4" y2="372" stroke="#22a0f0" stroke-width="1.1" opacity="1"/>
<line x1="523.9" y1="372" x2="523.9" y2="420" stroke="#d23ff0" stroke-width="1.1" opacity="0.85"/>
<line x1="525.9" y1="372" x2="525.9" y2="420" stroke="#d23ff0" stroke-width="1.1" opacity="0.7"/>
<line x1="523.9" y1="419.5" x2="526.4" y2="419.5" stroke="#d23ff0" stroke-width="1" opacity="0.8"/>
<line x1="524.4" y1="372.5" x2="527.6" y2="372.5" stroke="#1ea2f0" stroke-width="1" opacity="0.85"/>
<rect x="529" y="273" width="1.5" height="19" fill="#7048c0" opacity="0.5"/>
<line x1="528.6" y1="272" x2="528.6" y2="292" stroke="#d23ff0" stroke-width="1.3" opacity="1"/>
<line x1="531" y1="272" x2="531" y2="292" stroke="#d23ff0" stroke-width="1.3" opacity="1"/>
<line x1="528" y1="272.6" x2="531.6" y2="272.6" stroke="#d23ff0" stroke-width="1.2" opacity="1"/>
<rect x="528.3" y="292" width="2.4" height="18" fill="#8070f4" opacity="1"/>
<line x1="531.3" y1="292" x2="531.3" y2="310" stroke="#c844f0" stroke-width="1.4" opacity="0.9"/>
<rect x="528.5" y="310" width="2" height="35" fill="#6a54d8" opacity="0.8"/>
<rect x="530.7" y="310" width="1.5" height="35" fill="#d040f0" opacity="0.9"/>
<rect x="529" y="345" width="1.6" height="27" fill="#4490f4" opacity="0.7"/>
<line x1="528.5" y1="345" x2="528.5" y2="372" stroke="#22a0f0" stroke-width="1.1" opacity="1"/>
<line x1="531" y1="345" x2="531" y2="372" stroke="#22a0f0" stroke-width="1.1" opacity="1"/>
<rect x="534.0" y="273" width="1.0" height="19" fill="#7048c0" opacity="0.5"/>
<line x1="533.6" y1="272" x2="533.6" y2="292" stroke="#d23ff0" stroke-width="1.3" opacity="1"/>
<line x1="535.5" y1="272" x2="535.5" y2="292" stroke="#d23ff0" stroke-width="1.3" opacity="1"/>
<line x1="533.0" y1="272.6" x2="536.1" y2="272.6" stroke="#d23ff0" stroke-width="1.2" opacity="1"/>
<line x1="536.75" y1="272" x2="536.75" y2="292" stroke="#d23ff0" stroke-width="1" opacity="0.5"/>
<rect x="533.3" y="292" width="2.4" height="18" fill="#8070f4" opacity="1"/>
<line x1="535.8" y1="292" x2="535.8" y2="310" stroke="#c844f0" stroke-width="1.4" opacity="0.9"/>
<rect x="533.5" y="310" width="2" height="35" fill="#6a54d8" opacity="0.8"/>
<rect x="535.2" y="310" width="1.5" height="35" fill="#d040f0" opacity="0.9"/>
<rect x="534.0" y="345" width="1.6" height="27" fill="#4490f4" opacity="0.7"/>
<line x1="533.5" y1="345" x2="533.5" y2="372" stroke="#22a0f0" stroke-width="1.1" opacity="1"/>
<line x1="535.5" y1="345" x2="535.5" y2="372" stroke="#22a0f0" stroke-width="1.1" opacity="1"/>
<rect x="539.0" y="273" width="1.5" height="19" fill="#7048c0" opacity="0.5"/>
<line x1="538.6" y1="272" x2="538.6" y2="292" stroke="#d23ff0" stroke-width="1.3" opacity="1"/>
<line x1="541.0" y1="272" x2="541.0" y2="292" stroke="#d23ff0" stroke-width="1.3" opacity="1"/>
<line x1="538.0" y1="272.6" x2="541.6" y2="272.6" stroke="#d23ff0" stroke-width="1.2" opacity="1"/>
<line x1="542.0" y1="272" x2="542.0" y2="292" stroke="#d23ff0" stroke-width="1" opacity="0.5"/>
<rect x="538.3" y="292" width="2.4" height="18" fill="#8070f4" opacity="1"/>
<line x1="541.3" y1="292" x2="541.3" y2="310" stroke="#c844f0" stroke-width="1.4" opacity="0.9"/>
<rect x="538.5" y="310" width="2" height="35" fill="#6a54d8" opacity="0.8"/>
<rect x="540.7" y="310" width="1.5" height="35" fill="#d040f0" opacity="0.9"/>
<rect x="539.0" y="345" width="1.6" height="27" fill="#4490f4" opacity="0.7"/>
<line x1="538.5" y1="345" x2="538.5" y2="372" stroke="#22a0f0" stroke-width="1.1" opacity="1"/>
<line x1="541.0" y1="345" x2="541.0" y2="372" stroke="#22a0f0" stroke-width="1.1" opacity="1"/>
<rect x="544.0" y="273" width="1.5" height="19" fill="#7048c0" opacity="0.5"/>
<line x1="543.6" y1="272" x2="543.6" y2="292" stroke="#d23ff0" stroke-width="1.3" opacity="1"/>
<line x1="546.0" y1="272" x2="546.0" y2="292" stroke="#d23ff0" stroke-width="1.3" opacity="1"/>
<line x1="543.0" y1="272.6" x2="546.6" y2="272.6" stroke="#d23ff0" stroke-width="1.2" opacity="1"/>
<line x1="547.0" y1="272" x2="547.0" y2="292" stroke="#d23ff0" stroke-width="1" opacity="0.5"/>
<rect x="543.3" y="292" width="2.4" height="18" fill="#8070f4" opacity="1"/>
<line x1="546.3" y1="292" x2="546.3" y2="310" stroke="#c844f0" stroke-width="1.4" opacity="0.9"/>
<rect x="543.5" y="310" width="2" height="35" fill="#6a54d8" opacity="0.8"/>
<rect x="545.7" y="310" width="1.5" height="35" fill="#d040f0" opacity="0.9"/>
<rect x="544.0" y="345" width="1.6" height="27" fill="#4490f4" opacity="0.7"/>
<line x1="543.5" y1="345" x2="543.5" y2="372" stroke="#22a0f0" stroke-width="1.1" opacity="1"/>
<line x1="546.0" y1="345" x2="546.0" y2="372" stroke="#22a0f0" stroke-width="1.1" opacity="1"/>
<rect x="528" y="272" width="5.0" height="100" fill="#6a5ad8" opacity="0.0"/>
<rect x="528.5" y="337.1366054833718" width="2" height="25" fill="#3a90f0" opacity="0.6"/>
<line x1="528.5" y1="226" x2="528.5" y2="372" stroke="#1ea2f0" stroke-width="1" opacity="0.95"/>
<line x1="530.5" y1="226" x2="530.5" y2="372" stroke="#1ea2f0" stroke-width="1" opacity="0.95"/>
<line x1="528" y1="226.5" x2="531" y2="226.5" stroke="#1ea2f0" stroke-width="1" opacity="0.95"/>
<line x1="531.5" y1="272" x2="531.5" y2="420" stroke="#d23ff0" stroke-width="1" opacity="0.9"/>
<line x1="532.5" y1="272" x2="532.5" y2="420" stroke="#d23ff0" stroke-width="1" opacity="0.9"/>
<line x1="531" y1="419.5" x2="533.0" y2="419.5" stroke="#d23ff0" stroke-width="1" opacity="0.9"/>
<rect x="533.0" y="272" width="5.0" height="100" fill="#6a5ad8" opacity="0.0"/>
<rect x="533.5" y="340.0522272735971" width="2" height="25" fill="#3a90f0" opacity="0.6"/>
<line x1="533.5" y1="226" x2="533.5" y2="372" stroke="#1ea2f0" stroke-width="1" opacity="0.95"/>
<line x1="535.0" y1="226" x2="535.0" y2="372" stroke="#1ea2f0" stroke-width="1" opacity="0.95"/>
<line x1="533.0" y1="226.5" x2="535.5" y2="226.5" stroke="#1ea2f0" stroke-width="1" opacity="0.95"/>
<line x1="536.0" y1="272" x2="536.0" y2="420" stroke="#d23ff0" stroke-width="1" opacity="0.9"/>
<line x1="537.5" y1="272" x2="537.5" y2="420" stroke="#d23ff0" stroke-width="1" opacity="0.9"/>
<line x1="535.5" y1="419.5" x2="538.0" y2="419.5" stroke="#d23ff0" stroke-width="1" opacity="0.9"/>
<rect x="538.0" y="272" width="5.0" height="100" fill="#6a5ad8" opacity="0.0"/>
<rect x="541.0" y="300.3277733194051" width="1.5" height="28.41745057529412" fill="#d040f0" opacity="0.6"/>
<rect x="538.5" y="344.7139027465108" width="2" height="25" fill="#3a90f0" opacity="0.6"/>
<line x1="538.5" y1="226" x2="538.5" y2="372" stroke="#1ea2f0" stroke-width="1" opacity="0.95"/>
<line x1="540.5" y1="226" x2="540.5" y2="372" stroke="#1ea2f0" stroke-width="1" opacity="0.95"/>
<line x1="538.0" y1="226.5" x2="541.0" y2="226.5" stroke="#1ea2f0" stroke-width="1" opacity="0.95"/>
<line x1="541.5" y1="272" x2="541.5" y2="420" stroke="#d23ff0" stroke-width="1" opacity="0.9"/>
<line x1="542.5" y1="272" x2="542.5" y2="420" stroke="#d23ff0" stroke-width="1" opacity="0.9"/>
<line x1="541.0" y1="419.5" x2="543.0" y2="419.5" stroke="#d23ff0" stroke-width="1" opacity="0.9"/>
<rect x="543.0" y="272" width="5.0" height="100" fill="#6a5ad8" opacity="0.0"/>
<rect x="543.5" y="337.751617198689" width="2" height="25" fill="#3a90f0" opacity="0.6"/>
<line x1="543.5" y1="226" x2="543.5" y2="372" stroke="#1ea2f0" stroke-width="1" opacity="0.95"/>
<line x1="545.5" y1="226" x2="545.5" y2="372" stroke="#1ea2f0" stroke-width="1" opacity="0.95"/>
<line x1="543.0" y1="226.5" x2="546.0" y2="226.5" stroke="#1ea2f0" stroke-width="1" opacity="0.95"/>
<line x1="546.5" y1="272" x2="546.5" y2="420" stroke="#d23ff0" stroke-width="1" opacity="0.9"/>
<line x1="547.5" y1="272" x2="547.5" y2="420" stroke="#d23ff0" stroke-width="1" opacity="0.9"/>
<line x1="546.0" y1="419.5" x2="548.0" y2="419.5" stroke="#d23ff0" stroke-width="1" opacity="0.9"/>
<line x1="547.5" y1="226" x2="547.5" y2="420" stroke="#1ea2f0" stroke-width="1" opacity="0.9"/></g>
<line x1="243.5" y1="114" x2="243.5" y2="498" stroke="#c8202c" stroke-width="1.2" stroke-dasharray="3 3"/>
<line x1="535.5" y1="113" x2="535.5" y2="498" stroke="#8898b6" stroke-width="1.6" stroke-dasharray="2.2 3.7"/>
<text x="233" y="494" fill="#e02028" font-size="12" font-family="Liberation Sans">A</text>
<text x="525" y="493" fill="#e8eef8" font-size="12" font-family="Liberation Sans">B</text>
</g>
<rect x="10" y="498" width="793" height="5" fill="#fff"/>
</svg>
</body></html>
